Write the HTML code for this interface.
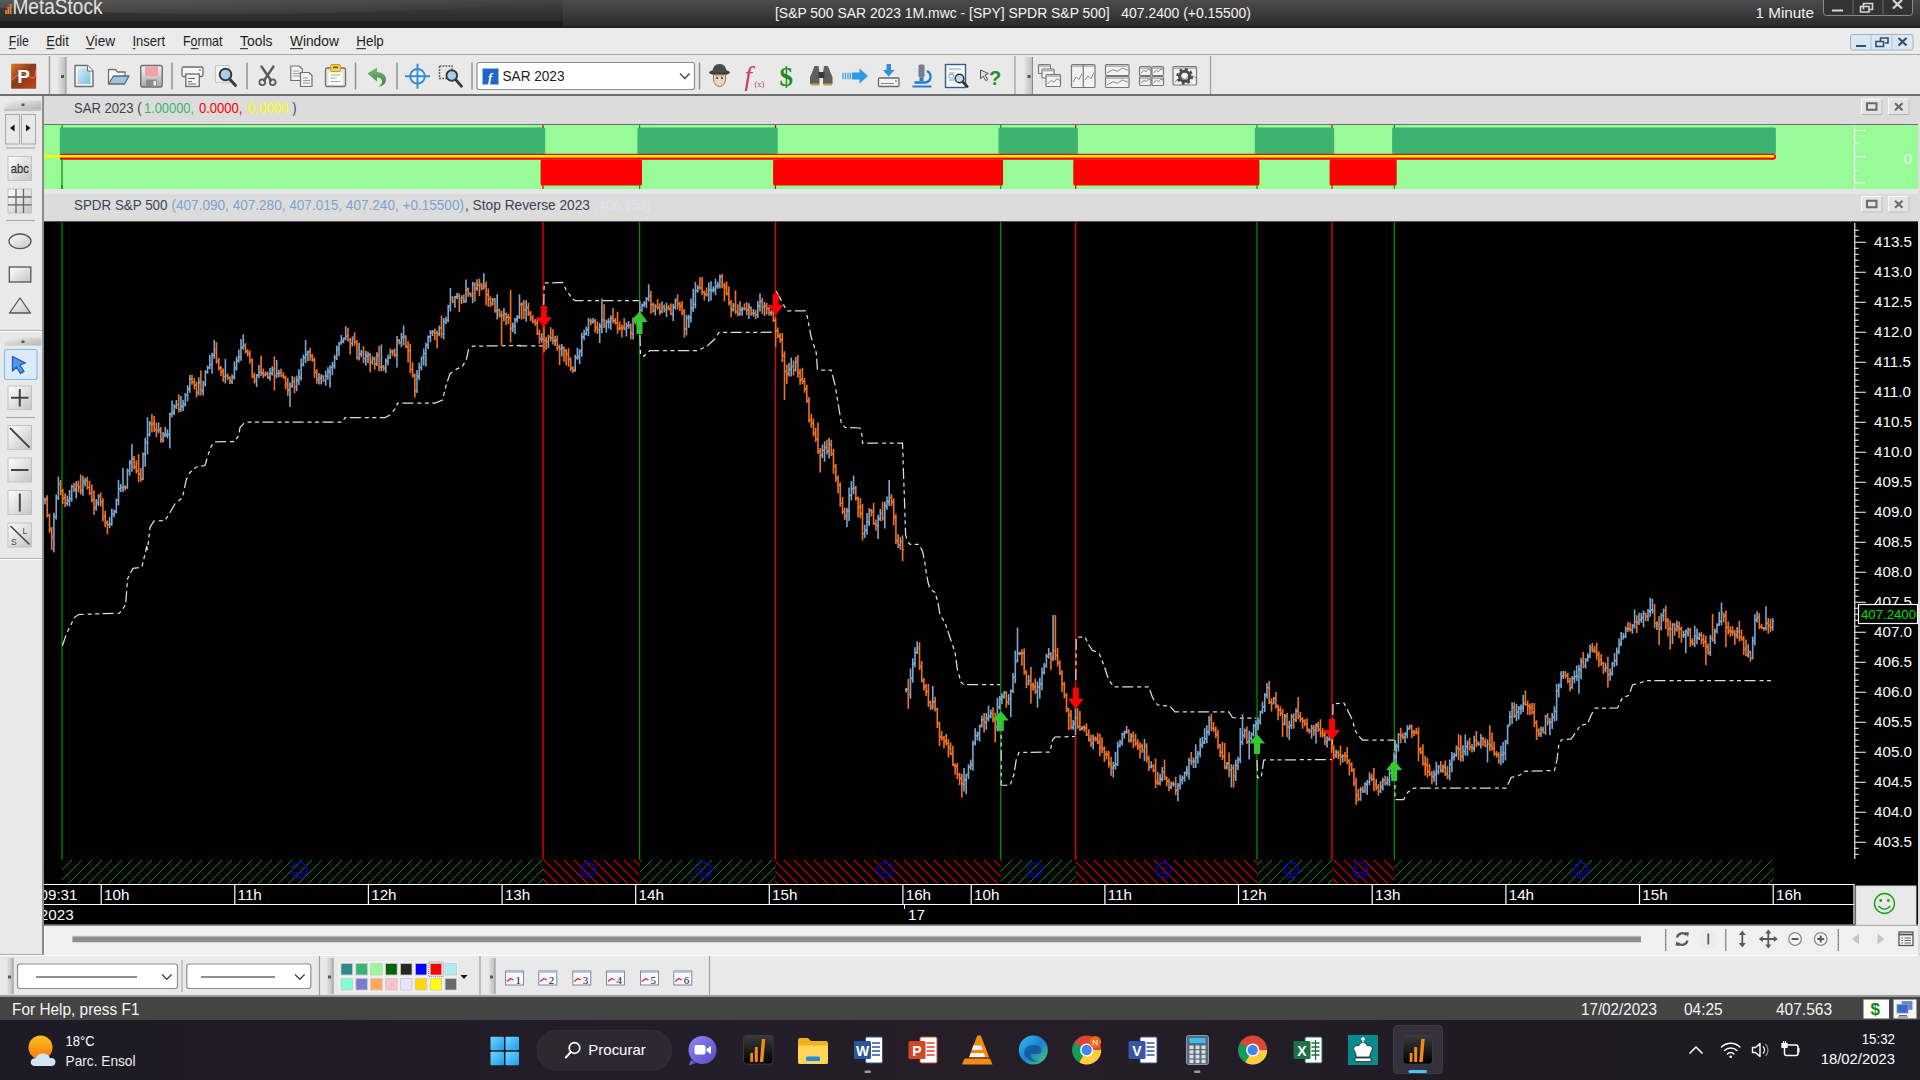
<!DOCTYPE html>
<html><head><meta charset="utf-8"><title>MetaStock</title>
<style>

*{box-sizing:border-box;margin:0;padding:0}
html,body{width:1920px;height:1080px;overflow:hidden;background:#ebebeb;font-family:"Liberation Sans",sans-serif;}
#root{position:relative;width:1920px;height:1080px;overflow:hidden;background:#ebebeb}
.abs{position:absolute}
#title{left:0;top:0;width:1920px;height:28px;background:linear-gradient(#4b4b4b 0,#3b3b3b 50%,#2b2b2b 90%,#1a1a1a 100%)}
#tl{left:0;top:0;width:563px;height:28px;background:linear-gradient(#444 0,#333 45%,#2b2b2b 72%,#1d1d1d 78%,#1d1d1d 100%);overflow:hidden}
#tl i{position:absolute;left:-120px;top:-36px;width:700px;height:50px;border-radius:50%;background:linear-gradient(90deg,rgba(255,255,255,.13),rgba(255,255,255,0))}
#menu{left:0;top:28px;width:1920px;height:27px;background:#ebebeb;border-bottom:1px solid #ababab}
#tb{left:0;top:55px;width:1920px;height:41px;background:#e9e9e9;border-bottom:2px solid #6e6e6e}
#lp{left:0;top:96px;width:44px;height:858.5px;background:#e9e9e9;border-right:2px solid #8c8c8c;border-bottom:1px solid #aaa}
.hdr{background:#dcdcdc}
#status{left:0;top:996.5px;width:1920px;height:23.5px;background:#444}
#task{left:0;top:1020px;width:1920px;height:60px;background:linear-gradient(90deg,#1d1b25 0,#221d28 30%,#251e29 55%,#1e1b24 80%,#1c1a22 100%)}

</style></head>
<body>
<div id="root">

<div id="title" class="abs"></div><div id="tl" class="abs"><i></i></div>
<div id="menu" class="abs"></div>
<div id="tb" class="abs"></div>
<div id="lp" class="abs"></div>
<div class="abs hdr" style="left:44px;top:96px;width:1874px;height:29px;border-bottom:1px solid #707070"></div>
<div class="abs" style="left:44px;top:189px;width:1874px;height:5px;background:#e6e6e6"></div>
<div class="abs hdr" style="left:44px;top:194px;width:1874px;height:28px;border-bottom:1px solid #555"></div>
<div class="abs" style="left:44px;top:926px;width:1876px;height:29px;background:#f0f0f0"></div>
<div class="abs" style="left:0;top:955px;width:1920px;height:42px;background:#e9e9e9;border-top:1px solid #fff;border-bottom:2px solid #9a9a9a"></div>
<div id="status" class="abs"></div>

<svg class="abs" style="left:0;top:0" width="1920" height="1080" viewBox="0 0 1920 1080" font-family="Liberation Sans, sans-serif">
<rect x="44" y="125" width="1874" height="64" fill="#98fb98"/>
<rect x="59.8" y="127.5" width="485.4" height="26.5" rx="1.5" fill="#3cb371"/>
<rect x="540.6" y="159.5" width="101.4" height="26" rx="1.5" fill="#f00"/>
<rect x="637.4" y="127.5" width="140.3" height="26.5" rx="1.5" fill="#3cb371"/>
<rect x="773.1" y="159.5" width="230" height="26" rx="1.5" fill="#f00"/>
<rect x="998.5" y="127.5" width="79.4" height="26.5" rx="1.5" fill="#3cb371"/>
<rect x="1073.3" y="159.5" width="186.1" height="26" rx="1.5" fill="#f00"/>
<rect x="1254.8" y="127.5" width="79.4" height="26.5" rx="1.5" fill="#3cb371"/>
<rect x="1329.6" y="159.5" width="67.1" height="26" rx="1.5" fill="#f00"/>
<rect x="1392.1" y="127.5" width="383.8" height="26.5" rx="1.5" fill="#3cb371"/>
<path d="M44 156.3H62" stroke="#ff0" stroke-width="2.6"/>
<path d="M60 156.7H1773" stroke="#f00" stroke-width="6"/><circle cx="1773" cy="156.7" r="3" fill="#f00"/>
<path d="M60 156.3H1773" stroke="#ff0" stroke-width="2.4"/><circle cx="1773" cy="156.3" r="1.2" fill="#ff0"/>
<path d="M62 125V128M62 185V189" stroke="#0a9a0a" stroke-width="1.2"/>
<path d="M543 125V128M543 185V189" stroke="#e00000" stroke-width="1.2"/>
<path d="M639.6 125V128M639.6 185V189" stroke="#0a9a0a" stroke-width="1.2"/>
<path d="M775.5 125V128M775.5 185V189" stroke="#e00000" stroke-width="1.2"/>
<path d="M1000.7 125V128M1000.7 185V189" stroke="#0a9a0a" stroke-width="1.2"/>
<path d="M1075.7 125V128M1075.7 185V189" stroke="#e00000" stroke-width="1.2"/>
<path d="M1257 125V128M1257 185V189" stroke="#0a9a0a" stroke-width="1.2"/>
<path d="M1332 125V128M1332 185V189" stroke="#e00000" stroke-width="1.2"/>
<path d="M1394.3 125V128M1394.3 185V189" stroke="#0a9a0a" stroke-width="1.2"/>
<path d="M62 157V189" stroke="#0a8a0a" stroke-width="1.2"/>
<path d="M1854.5 125V189M1854.5 130.5h10.5M1854.5 143h4.5M1854.5 156.7h10.5M1854.5 170.5h4.5M1854.5 183h10.5" stroke="#fff" stroke-width="1.1" fill="none"/>
<text x="1904" y="163.5" font-size="14.5" fill="#f0fff0">0</text>
<rect x="44" y="222" width="1874" height="702.7" fill="#000"/><rect x="44" y="924.7" width="1876" height="1.3" fill="#8c8c8c"/>
<path d="M62 222V859.5" stroke="#009800" stroke-width="1.2"/>
<path d="M543 222V859.5" stroke="#f00000" stroke-width="1.35"/>
<path d="M639.6 222V859.5" stroke="#009800" stroke-width="1.2"/>
<path d="M775.5 222V859.5" stroke="#f00000" stroke-width="1.35"/>
<path d="M1000.7 222V859.5" stroke="#009800" stroke-width="1.2"/>
<path d="M1075.7 222V859.5" stroke="#f00000" stroke-width="1.35"/>
<path d="M1257 222V859.5" stroke="#009800" stroke-width="1.2"/>
<path d="M1332 222V859.5" stroke="#f00000" stroke-width="1.35"/>
<path d="M1394.3 222V859.5" stroke="#009800" stroke-width="1.2"/>
<defs>
<pattern id="hg" width="10" height="10" patternUnits="userSpaceOnUse" x="2" y="860"><path d="M-1 11L11 -1M-1 1L1 -1M9 11L11 9" stroke="#009000" stroke-width="1"/></pattern>
<pattern id="hr" width="10" height="10" patternUnits="userSpaceOnUse" x="4" y="860"><path d="M-1 -1L11 11M9 -1L11 1M-1 9L1 11" stroke="#d80000" stroke-width="1.1"/></pattern>
</defs>
<rect x="62" y="860" width="481" height="24" fill="url(#hg)"/>
<rect x="543" y="860" width="96.6" height="24" fill="url(#hr)"/>
<rect x="639.6" y="860" width="135.9" height="24" fill="url(#hg)"/>
<rect x="775.5" y="860" width="225.2" height="24" fill="url(#hr)"/>
<rect x="1000.7" y="860" width="75" height="24" fill="url(#hg)"/>
<rect x="1075.7" y="860" width="181.3" height="24" fill="url(#hr)"/>
<rect x="1257" y="860" width="75" height="24" fill="url(#hg)"/>
<rect x="1332" y="860" width="62.3" height="24" fill="url(#hr)"/>
<rect x="1394.3" y="860" width="379.4" height="24" fill="url(#hg)"/>
<g stroke="#0000d0" fill="none" stroke-width="1.3"><circle cx="299.5" cy="870" r="7.3"/><path d="M295.5 872q4 4.2 8 0"/><path d="M296.1 867.4h1.4M301.5 867.4h1.4" stroke-width="1.5"/></g>
<g stroke="#0000d0" fill="none" stroke-width="1.3"><circle cx="588.3" cy="870" r="7.3"/><path d="M584.3 874.2q4 -4.2 8 0"/><path d="M584.9 867.4h1.4M590.3 867.4h1.4" stroke-width="1.5"/></g>
<g stroke="#0000d0" fill="none" stroke-width="1.3"><circle cx="704.5" cy="870" r="7.3"/><path d="M700.5 872q4 4.2 8 0"/><path d="M701.1 867.4h1.4M706.5 867.4h1.4" stroke-width="1.5"/></g>
<g stroke="#0000d0" fill="none" stroke-width="1.3"><circle cx="885.1" cy="870" r="7.3"/><path d="M881.1 874.2q4 -4.2 8 0"/><path d="M881.7 867.4h1.4M887.1 867.4h1.4" stroke-width="1.5"/></g>
<g stroke="#0000d0" fill="none" stroke-width="1.3"><circle cx="1035.2" cy="870" r="7.3"/><path d="M1031.2 872q4 4.2 8 0"/><path d="M1031.8 867.4h1.4M1037.2 867.4h1.4" stroke-width="1.5"/></g>
<g stroke="#0000d0" fill="none" stroke-width="1.3"><circle cx="1163.3" cy="870" r="7.3"/><path d="M1159.3 874.2q4 -4.2 8 0"/><path d="M1159.9 867.4h1.4M1165.3 867.4h1.4" stroke-width="1.5"/></g>
<g stroke="#0000d0" fill="none" stroke-width="1.3"><circle cx="1291.5" cy="870" r="7.3"/><path d="M1287.5 872q4 4.2 8 0"/><path d="M1288.1 867.4h1.4M1293.5 867.4h1.4" stroke-width="1.5"/></g>
<g stroke="#0000d0" fill="none" stroke-width="1.3"><circle cx="1360.2" cy="870" r="7.3"/><path d="M1356.2 874.2q4 -4.2 8 0"/><path d="M1356.8 867.4h1.4M1362.2 867.4h1.4" stroke-width="1.5"/></g>
<g stroke="#0000d0" fill="none" stroke-width="1.3"><circle cx="1581" cy="870" r="7.3"/><path d="M1577 872q4 4.2 8 0"/><path d="M1577.6 867.4h1.4M1583 867.4h1.4" stroke-width="1.5"/></g>
<path d="M62.4 645.8 L66.5 633.6 L74.6 617.3 L78.7 614.5 L119.5 613.2 L125.6 605.1 L127.6 578.6 L132.9 568.4 L141.9 567.2 L146.8 546 L147.5 550 L150 527.5 L153.8 521.2 L165 520.5 L170 512.5 L175 503.8 L182.5 497.5 L186.2 480 L190 472.5 L196.2 467 L205 465.5 L208 455 L211.2 446.2 L215 442 L235 441.5 L238.8 435 L240 427.5 L245 422 L342.5 422 L345 417.5 L385 417.5 L390 415 L396.2 407.5 L397.5 403 L435 403 L442.5 400 L446.2 385 L450 373.8 L455 370 L462.5 366.2 L466.2 360 L468.8 348.8 L472.5 346.2 L520 345.5 L520 345.8 L543.8 345.8" fill="none" stroke="#dcdce2" stroke-width="1.25" stroke-dasharray="11 4 4 3.5 4 3.5"/>
<path d="M543.8 305 L544.2 283 L562.5 282.5 L566.2 290 L572.5 298.8 L575 300.5 L638.8 300.5" fill="none" stroke="#dcdce2" stroke-width="1.25" stroke-dasharray="11 4 4 3.5 4 3.5"/>
<path d="M640 335 L640.5 355 L643.8 356.2 L650 350.5 L697.5 350.5 L707.5 345.8 L715 338.8 L718.8 332.5 L775 332.2" fill="none" stroke="#dcdce2" stroke-width="1.25" stroke-dasharray="11 4 4 3.5 4 3.5"/>
<path d="M776.2 291.2 L785 307.5 L787.5 310.8 L805.5 310.8 L807.5 317.5 L811.2 337.5 L816.2 352.5 L817.5 370 L831.2 370 L835 385 L838.8 407.5 L841.2 422.5 L845 427.5 L860 428 L862 435 L862.5 443.2 L902.5 443.2 L903.2 460 L903.1 463.8 L904.4 497.5 L905.6 535 L907.5 541.2 L910 544.4 L918.8 544.4 L922.5 551.2 L924.4 560 L926.2 572.5 L928.1 582.5 L930 588.8 L935 592.5 L938 602.5 L940 615 L945 622.5 L950 637.5 L955 652.5 L957.5 670 L961.2 682.5 L963.8 684.5 L1000 684.5" fill="none" stroke="#dcdce2" stroke-width="1.25" stroke-dasharray="11 4 4 3.5 4 3.5"/>
<path d="M1001.2 720 L1001.2 785 L1010 785.5 L1013.8 775 L1016.2 760 L1018.8 752.5 L1050 752 L1052.5 740 L1055 737 L1075 736.5" fill="none" stroke="#dcdce2" stroke-width="1.25" stroke-dasharray="11 4 4 3.5 4 3.5"/>
<path d="M1075.8 680 L1076.2 637 L1085 637 L1088.8 645 L1092.5 650.5 L1098.8 652.5 L1103.8 665 L1108.8 680 L1113.8 686.8 L1148.8 686.8 L1152.5 697.5 L1157.5 705 L1170 706.2 L1175 711.8 L1228.8 711.8 L1232.5 717.5 L1240 718.2 L1256.2 718.2" fill="none" stroke="#dcdce2" stroke-width="1.25" stroke-dasharray="11 4 4 3.5 4 3.5"/>
<path d="M1257 760 L1257.5 777.5 L1261.2 777.5 L1263.8 760 L1332 759.5" fill="none" stroke="#dcdce2" stroke-width="1.25" stroke-dasharray="11 4 4 3.5 4 3.5"/>
<path d="M1332.5 745 L1333 703.8 L1332.5 703.8 L1343.8 703 L1347.5 710 L1352.5 720 L1355 730 L1358.8 736.2 L1362.5 740 L1393.8 740" fill="none" stroke="#dcdce2" stroke-width="1.25" stroke-dasharray="11 4 4 3.5 4 3.5"/>
<path d="M1395 740 L1395 799.5 L1403.8 799.5 L1407.5 792.5 L1413.8 788 L1506.2 788 L1511.2 777.5 L1520 775 L1525 771.2 L1554.5 770.5 L1557 760 L1558.8 745 L1561.2 740 L1571.2 738.8 L1577.5 730 L1580 725.5 L1587.5 723.8 L1591.2 715 L1595 708.2 L1617.5 708 L1622.5 697.5 L1628.8 695.5 L1632.5 685 L1642.5 682 L1647.5 680.5 L1773.8 680.5" fill="none" stroke="#dcdce2" stroke-width="1.25" stroke-dasharray="11 4 4 3.5 4 3.5"/>
<path d="M47.2 495.2V517.4M47.2 499.2h-1.2M47.2 515.7h1.2M49.5 513.6V532.8M49.5 515.4h-1.2M49.5 529.3h1.2M51.7 527.1V550M51.7 529.5h-1.2M51.7 536.6h1.2M60.6 480V495.2M60.6 483.2h-1.2M60.6 490.8h1.2M62.8 488.8V504.1M62.8 491.1h-1.2M62.8 498.5h1.2M65.1 493.2V507.3M65.1 497.9h-1.2M65.1 503.6h1.2M74 482.7V491.9M74 486.7h-1.2M74 490.3h1.2M78.4 480.6V492.5M78.4 485.4h-1.2M78.4 487.9h1.2M80.7 474.5V494.4M80.7 486.4h-1.2M80.7 490.6h1.2M87.3 476.7V489.5M87.3 480.4h-1.2M87.3 487.3h1.2M89.6 480.8V495.3M89.6 487.5h-1.2M89.6 493.3h1.2M91.8 484.4V502.2M91.8 493.3h-1.2M91.8 500.4h1.2M94 490.2V514.9M94 499.4h-1.2M94 507.3h1.2M100.7 492.4V506.5M100.7 496.3h-1.2M100.7 501.8h1.2M102.9 498.3V521.4M102.9 501.8h-1.2M102.9 518.3h1.2M105.2 510.7V527.2M105.2 516.4h-1.2M105.2 523.1h1.2M107.4 520.5V534.3M107.4 522.2h-1.2M107.4 524.6h1.2M125.2 485.2V490.5M125.2 487.1h-1.2M125.2 487.4h1.2M134.1 455.9V469.2M134.1 459.1h-1.2M134.1 467.1h1.2M136.3 460.3V473.6M136.3 467.2h-1.2M136.3 470.7h1.2M138.6 454.3V482.2M138.6 470.9h-1.2M138.6 473.8h1.2M140.8 468V481.7M140.8 474.3h-1.2M140.8 479.3h1.2M151.9 414.1V432.6M151.9 423.9h-1.2M151.9 424.5h1.2M154.2 416.1V432.1M154.2 423.4h-1.2M154.2 430.3h1.2M156.4 422.4V437.3M156.4 429.3h-1.2M156.4 430.8h1.2M160.8 427.1V442.8M160.8 430.4h-1.2M160.8 439.4h1.2M178.7 394.2V412.5M178.7 404.4h-1.2M178.7 409.5h1.2M192 374.8V384.7M192 379.2h-1.2M192 382.2h1.2M194.3 377.9V389.6M194.3 382h-1.2M194.3 385.1h1.2M196.5 381.6V397.6M196.5 385.2h-1.2M196.5 392.7h1.2M200.9 370.4V395.6M200.9 382.1h-1.2M200.9 389.8h1.2M216.5 342.2V363.7M216.5 350.1h-1.2M216.5 361.6h1.2M218.8 357.7V370.4M218.8 360.7h-1.2M218.8 368.2h1.2M221 366.1V375.9M221 367.6h-1.2M221 371.5h1.2M223.2 368.4V381.8M223.2 371.4h-1.2M223.2 376.8h1.2M227.7 373.5V379.8M227.7 376.1h-1.2M227.7 378.1h1.2M229.9 376.2V384.1M229.9 378.2h-1.2M229.9 380.6h1.2M245.5 343.3V353.4M245.5 345.8h-1.2M245.5 351.5h1.2M247.7 349.3V356.5M247.7 351.6h-1.2M247.7 353.7h1.2M249.9 350.5V363.8M249.9 353.2h-1.2M249.9 359.8h1.2M252.2 358.6V378.1M252.2 360.1h-1.2M252.2 375.6h1.2M254.4 372.5V383.5M254.4 376.9h-1.2M254.4 381.2h1.2M261.1 355.6V375.9M261.1 371.6h-1.2M261.1 372.9h1.2M263.3 368.4V378.2M263.3 373.5h-1.2M263.3 374.8h1.2M267.8 371.4V379M267.8 373.6h-1.2M267.8 377.1h1.2M274.4 356.2V390.4M274.4 369.4h-1.2M274.4 376h1.2M281.1 368.5V377M281.1 372.5h-1.2M281.1 375.5h1.2M283.4 372.1V378.8M283.4 375.5h-1.2M283.4 377.2h1.2M285.6 375.4V389.4M285.6 377.8h-1.2M285.6 384.8h1.2M287.8 378.1V395.9M287.8 383.5h-1.2M287.8 389.9h1.2M294.5 376.8V393.3M294.5 381.9h-1.2M294.5 387h1.2M310.1 347.7V360.8M310.1 351.9h-1.2M310.1 355.4h1.2M312.3 354.1V361.8M312.3 356.6h-1.2M312.3 360h1.2M314.5 357.5V378M314.5 359.9h-1.2M314.5 371.6h1.2M316.8 369.3V383.8M316.8 372.6h-1.2M316.8 380h1.2M323.4 374.9V382.1M323.4 376.4h-1.2M323.4 380.4h1.2M348 327.7V341.5M348 335.8h-1.2M348 340h1.2M350.2 338.1V354.5M350.2 340h-1.2M350.2 343.6h1.2M354.6 332.2V345.4M354.6 336.9h-1.2M354.6 342.3h1.2M356.9 340V359.5M356.9 341.7h-1.2M356.9 357.6h1.2M363.5 346.2V363.2M363.5 353.7h-1.2M363.5 358.1h1.2M370.2 353V372.3M370.2 354.7h-1.2M370.2 361.4h1.2M374.7 356.5V369.4M374.7 359.1h-1.2M374.7 364.1h1.2M379.1 345.7V371.2M379.1 355.7h-1.2M379.1 367.2h1.2M383.6 364.9V371M383.6 366.8h-1.2M383.6 368h1.2M392.5 349.5V356.1M392.5 351.4h-1.2M392.5 352.1h1.2M394.7 348.6V357.6M394.7 351h-1.2M394.7 355h1.2M399.2 339V344.5M399.2 340.6h-1.2M399.2 342.9h1.2M405.9 335.2V348.3M405.9 337.7h-1.2M405.9 346.4h1.2M408.1 341.3V362.4M408.1 347h-1.2M408.1 350.7h1.2M410.3 343.8V373.2M410.3 350.5h-1.2M410.3 369.5h1.2M412.6 362.3V377.6M412.6 369.3h-1.2M412.6 375.2h1.2M414.8 373.4V397.5M414.8 376.2h-1.2M414.8 391h1.2M434.8 328.4V340.1M434.8 330.7h-1.2M434.8 332.9h1.2M437.1 330.5V348.6M437.1 332.8h-1.2M437.1 334.5h1.2M441.5 315.6V338M441.5 328h-1.2M441.5 334h1.2M452.6 296.2V303.3M452.6 299.1h-1.2M452.6 301.1h1.2M459.3 293.3V312M459.3 296.4h-1.2M459.3 299.3h1.2M463.8 294.6V303M463.8 298.2h-1.2M463.8 301.4h1.2M468.2 287.4V296.7M468.2 289.1h-1.2M468.2 293.3h1.2M470.5 292.2V296.7M470.5 293.9h-1.2M470.5 295.1h1.2M474.9 282.2V301.5M474.9 284.9h-1.2M474.9 288.7h1.2M479.4 278.6V296.1M479.4 285.2h-1.2M479.4 285.7h1.2M481.6 282.8V290.6M481.6 284.4h-1.2M481.6 288.2h1.2M486.1 281.8V305.3M486.1 285.8h-1.2M486.1 294.3h1.2M488.3 288.6V306.8M488.3 294.9h-1.2M488.3 299.1h1.2M490.5 296.3V307.1M490.5 299.3h-1.2M490.5 304.3h1.2M495 298V312.7M495 299.7h-1.2M495 311h1.2M499.4 308.7V317.4M499.4 310.5h-1.2M499.4 315.6h1.2M501.6 310.7V345M501.6 314.3h-1.2M501.6 315.7h1.2M506.1 312.4V325.3M506.1 314.3h-1.2M506.1 317.1h1.2M508.3 313.7V323.9M508.3 316.9h-1.2M508.3 317.6h1.2M510.6 290V342.5M510.6 317.7h-1.2M510.6 328.1h1.2M521.7 302.2V319.4M521.7 304.4h-1.2M521.7 304.9h1.2M523.9 300.1V319.1M523.9 303.3h-1.2M523.9 310.3h1.2M528.4 302.9V316M528.4 307.9h-1.2M528.4 313.6h1.2M530.6 311V321M530.6 313.3h-1.2M530.6 318.5h1.2M532.8 315.2V323.3M532.8 317.5h-1.2M532.8 321.8h1.2M535.1 319V325.7M535.1 321.2h-1.2M535.1 322.8h1.2M537.3 318.9V334.9M537.3 323.2h-1.2M537.3 333.2h1.2M539.5 329.4V343.8M539.5 333.8h-1.2M539.5 338.6h1.2M544 326.3V352.5M544 338.8h-1.2M544 340.8h1.2M546.2 336.7V350M546.2 340.1h-1.2M546.2 341.3h1.2M550.7 327.3V341.6M550.7 337.1h-1.2M550.7 338.1h1.2M552.9 329.2V344.4M552.9 338.4h-1.2M552.9 340.7h1.2M557.3 335.5V350.7M557.3 340.5h-1.2M557.3 347.6h1.2M559.6 344.4V365M559.6 347.1h-1.2M559.6 348.8h1.2M564 346.5V361.8M564 348.4h-1.2M564 350h1.2M566.2 349.2V365.5M566.2 350.9h-1.2M566.2 354.6h1.2M568.5 348.3V366.7M568.5 353.3h-1.2M568.5 359h1.2M570.7 357.3V371.1M570.7 359.7h-1.2M570.7 367.7h1.2M572.9 366.3V373M572.9 368.5h-1.2M572.9 370.6h1.2M590.8 318.4V325.2M590.8 320.7h-1.2M590.8 321.4h1.2M595.2 319.1V332.5M595.2 320.8h-1.2M595.2 327.3h1.2M597.4 321.6V333.9M597.4 328.5h-1.2M597.4 329.8h1.2M604.1 304.2V327.9M604.1 320.2h-1.2M604.1 323.9h1.2M613 308V323.2M613 318.6h-1.2M613 320.9h1.2M615.3 317.9V324.6M615.3 320.8h-1.2M615.3 323h1.2M617.5 311.8V333.8M617.5 323.2h-1.2M617.5 328.2h1.2M619.7 321.5V330.6M619.7 328.5h-1.2M619.7 328.7h1.2M621.9 324.4V337.4M621.9 327.5h-1.2M621.9 328.4h1.2M624.2 318.2V329.9M624.2 327.4h-1.2M624.2 328h1.2M630.8 323.4V339.2M630.8 325.6h-1.2M630.8 332.8h1.2M635.3 315.8V324.6M635.3 321.2h-1.2M635.3 321.7h1.2M650.9 290.8V313.8M650.9 295.9h-1.2M650.9 304.9h1.2M653.1 302.4V312.5M653.1 305h-1.2M653.1 311h1.2M657.6 299.3V309.8M657.6 305.6h-1.2M657.6 307.2h1.2M659.8 303.2V315M659.8 307.4h-1.2M659.8 311.6h1.2M664.3 304.5V312.4M664.3 306.6h-1.2M664.3 310.1h1.2M668.7 305.3V310.3M668.7 308h-1.2M668.7 308.6h1.2M670.9 303.6V315.3M670.9 309.7h-1.2M670.9 313.8h1.2M677.6 294.3V309.4M677.6 300.8h-1.2M677.6 303.6h1.2M679.9 301.7V311M679.9 304.4h-1.2M679.9 306.6h1.2M682.1 301.2V315.2M682.1 305.3h-1.2M682.1 312.5h1.2M684.3 308.9V337.6M684.3 311.2h-1.2M684.3 328.4h1.2M699.9 277.3V289.8M699.9 287.5h-1.2M699.9 287.8h1.2M702.1 277.1V295.1M702.1 288.2h-1.2M702.1 292.1h1.2M704.4 290.6V300.5M704.4 292.2h-1.2M704.4 294.7h1.2M706.6 287.6V296.5M706.6 293.9h-1.2M706.6 294.7h1.2M722.2 274V288.2M722.2 276.5h-1.2M722.2 285.5h1.2M724.4 282.5V301.3M724.4 285.4h-1.2M724.4 287.9h1.2M726.6 281.3V295.6M726.6 286.3h-1.2M726.6 294h1.2M728.9 286.4V305.6M728.9 293.3h-1.2M728.9 302.6h1.2M731.1 299.9V317.3M731.1 302.3h-1.2M731.1 308.7h1.2M735.5 290.5V313.9M735.5 305.7h-1.2M735.5 312.3h1.2M737.8 304.2V316.2M737.8 311.4h-1.2M737.8 314h1.2M744.4 303.5V310.6M744.4 308.7h-1.2M744.4 308.8h1.2M746.7 302V315.2M746.7 309.1h-1.2M746.7 310.1h1.2M751.1 306.5V315.7M751.1 308h-1.2M751.1 313.4h1.2M755.6 309.8V319.1M755.6 313.5h-1.2M755.6 314.9h1.2M762.3 297.8V314M762.3 301.4h-1.2M762.3 307.2h1.2M766.7 303V314.4M766.7 305.8h-1.2M766.7 308.6h1.2M769 306.7V315.7M769 308.8h-1.2M769 313.2h1.2M773.4 307V322.1M773.4 313.2h-1.2M773.4 320.3h1.2M775.6 317.4V347M775.6 320.6h-1.2M775.6 330.6h1.2M777.9 327.4V338.2M777.9 331h-1.2M777.9 335.9h1.2M780.1 333.3V342.7M780.1 335.7h-1.2M780.1 339.4h1.2M782.3 333.1V361.9M782.3 340.2h-1.2M782.3 356.1h1.2M784.5 351.2V400M784.5 355h-1.2M784.5 371.6h1.2M786.8 364.6V384.1M786.8 371h-1.2M786.8 374h1.2M793.5 360.5V375.6M793.5 366.1h-1.2M793.5 370.4h1.2M797.9 355V377.7M797.9 361h-1.2M797.9 372.6h1.2M800.1 368.9V384.9M800.1 372.6h-1.2M800.1 379.9h1.2M802.4 367.8V384.1M802.4 378.9h-1.2M802.4 381.9h1.2M804.6 377.9V392.8M804.6 381.1h-1.2M804.6 388.9h1.2M806.8 384.8V402.8M806.8 389.1h-1.2M806.8 400.7h1.2M809 396.9V422.6M809 401.1h-1.2M809 420.7h1.2M811.3 413.8V427.8M811.3 419.8h-1.2M811.3 423.8h1.2M813.5 418.6V436.4M813.5 422.8h-1.2M813.5 433h1.2M815.7 427.8V442.3M815.7 433.5h-1.2M815.7 439h1.2M818 422.6V453.9M818 439h-1.2M818 450.8h1.2M820.2 448V472.5M820.2 451.4h-1.2M820.2 455.5h1.2M826.9 439.7V454.4M826.9 447h-1.2M826.9 451.1h1.2M831.3 439.8V456M831.3 444.3h-1.2M831.3 453.6h1.2M833.5 449.1V473.9M833.5 454.3h-1.2M833.5 466.2h1.2M835.8 463.9V481.9M835.8 466.6h-1.2M835.8 477.5h1.2M838 475.5V493.3M838 478.6h-1.2M838 484.9h1.2M840.2 482.3V506.7M840.2 484.8h-1.2M840.2 503.2h1.2M842.5 497.1V514.3M842.5 503.2h-1.2M842.5 511.6h1.2M844.7 507.8V520.1M844.7 511.7h-1.2M844.7 516.6h1.2M855.8 485.9V500.8M855.8 487.9h-1.2M855.8 498.3h1.2M858.1 496.4V517.2M858.1 498.4h-1.2M858.1 507.2h1.2M860.3 497.9V518.2M860.3 507.4h-1.2M860.3 513.4h1.2M862.5 504V540.5M862.5 513.6h-1.2M862.5 533.5h1.2M871.4 509.1V516.4M871.4 511.2h-1.2M871.4 512.5h1.2M873.6 502.9V525M873.6 511.5h-1.2M873.6 523.5h1.2M875.9 519.5V530.7M875.9 523.9h-1.2M875.9 525.3h1.2M882.6 502V520.8M882.6 513.1h-1.2M882.6 517.8h1.2M891.5 494V506.1M891.5 497.6h-1.2M891.5 502.6h1.2M893.7 498.5V525.5M893.7 501.2h-1.2M893.7 517.7h1.2M895.9 514.3V544M895.9 516.9h-1.2M895.9 540h1.2M898.1 534V547.9M898.1 541.1h-1.2M898.1 544.9h1.2M902.6 535.5V561.2M902.6 541.6h-1.2M902.6 549.6h1.2M908.3 678.8V708.8M908.3 689.5h-1.2M908.3 695h1.2M919.5 642.3V670M919.5 647.6h-1.2M919.5 666.9h1.2M921.7 661.1V682.5M921.7 665.6h-1.2M921.7 680h1.2M923.9 677.9V690.7M923.9 680.8h-1.2M923.9 687.1h1.2M926.1 684V696M926.1 685.7h-1.2M926.1 691.5h1.2M928.4 684.1V707.1M928.4 691.6h-1.2M928.4 702.5h1.2M930.6 700.5V710M930.6 702.1h-1.2M930.6 706.7h1.2M935.1 696.7V711.6M935.1 702h-1.2M935.1 709.2h1.2M937.3 707.8V728.1M937.3 709.3h-1.2M937.3 722.5h1.2M939.5 722.1V745.9M939.5 723.9h-1.2M939.5 737.1h1.2M941.7 731.1V740.8M941.7 737.2h-1.2M941.7 738.3h1.2M944 736.1V748.6M944 737.8h-1.2M944 741.8h1.2M946.2 734V745.5M946.2 740.2h-1.2M946.2 743.7h1.2M948.4 739.1V757.6M948.4 742.8h-1.2M948.4 746.4h1.2M950.6 742.4V755.2M950.6 748.5h-1.2M950.6 753.6h1.2M952.9 746.1V766.1M952.9 753.7h-1.2M952.9 764.3h1.2M955.1 763.4V774.8M955.1 765.5h-1.2M955.1 766.2h1.2M957.3 763.1V778.9M957.3 766.2h-1.2M957.3 774.3h1.2M959.6 772.7V785.1M959.6 774.8h-1.2M959.6 777.9h1.2M961.8 773.7V797.5M961.8 778.7h-1.2M961.8 783.5h1.2M984.1 713.1V732.6M984.1 718.8h-1.2M984.1 722.3h1.2M993 707.3V722.5M993 714.5h-1.2M993 718.8h1.2M995.2 712.7V742.5M995.2 719.6h-1.2M995.2 728.1h1.2M1006.3 691.2V707.7M1006.3 693.1h-1.2M1006.3 702.5h1.2M1021.9 649.2V665.7M1021.9 652.9h-1.2M1021.9 653.6h1.2M1024.2 648.6V674.7M1024.2 653.4h-1.2M1024.2 671.4h1.2M1026.4 670.2V688.2M1026.4 672.8h-1.2M1026.4 683.7h1.2M1030.9 666.9V703.6M1030.9 680.5h-1.2M1030.9 684.9h1.2M1033.1 682.5V690.7M1033.1 685.1h-1.2M1033.1 687.6h1.2M1035.3 678.6V694M1035.3 686.6h-1.2M1035.3 692.3h1.2M1050.9 652V670M1050.9 654.4h-1.2M1050.9 658.8h1.2M1055.4 615V660.3M1055.4 651.1h-1.2M1055.4 655.2h1.2M1057.6 647.7V666.8M1057.6 655.5h-1.2M1057.6 663h1.2M1059.8 660.3V674.9M1059.8 662.7h-1.2M1059.8 673.2h1.2M1062 670.2V692.3M1062 672.2h-1.2M1062 683.4h1.2M1064.3 682.1V698.4M1064.3 684.3h-1.2M1064.3 695.8h1.2M1066.5 693V712.2M1066.5 695.2h-1.2M1066.5 708.3h1.2M1068.7 707.9V730.3M1068.7 709.9h-1.2M1068.7 715h1.2M1071 710.1V729.6M1071 715.5h-1.2M1071 727.3h1.2M1077.6 708.3V728.8M1077.6 718h-1.2M1077.6 727.1h1.2M1079.9 711.1V731M1079.9 726.4h-1.2M1079.9 729.4h1.2M1084.3 725V731.7M1084.3 727.2h-1.2M1084.3 728.1h1.2M1086.5 723.3V736.1M1086.5 727.9h-1.2M1086.5 734.1h1.2M1088.8 729.3V741.8M1088.8 735.3h-1.2M1088.8 739.5h1.2M1091 734.8V747M1091 739.7h-1.2M1091 743h1.2M1095.5 736.3V741.5M1095.5 738.6h-1.2M1095.5 739.8h1.2M1097.7 732.8V744.3M1097.7 738.9h-1.2M1097.7 742.6h1.2M1099.9 733.8V756.2M1099.9 741.9h-1.2M1099.9 747.5h1.2M1102.1 737.3V752.9M1102.1 747.5h-1.2M1102.1 749h1.2M1104.4 746.3V761.9M1104.4 748.6h-1.2M1104.4 754h1.2M1106.6 751.1V759.4M1106.6 754.3h-1.2M1106.6 754.6h1.2M1108.8 751V767.5M1108.8 754.6h-1.2M1108.8 763.4h1.2M1111.1 756.7V775.7M1111.1 764.3h-1.2M1111.1 767h1.2M1128.9 729.2V742.5M1128.9 730.9h-1.2M1128.9 740.5h1.2M1133.3 731.4V747.9M1133.3 736.1h-1.2M1133.3 739.3h1.2M1135.6 733.7V746.3M1135.6 740.2h-1.2M1135.6 744.2h1.2M1137.8 739.2V749.9M1137.8 742.5h-1.2M1137.8 746.4h1.2M1140 742.3V758.5M1140 745.6h-1.2M1140 746.8h1.2M1142.2 743.6V752.9M1142.2 746.1h-1.2M1142.2 749.9h1.2M1146.7 743.3V762.6M1146.7 745h-1.2M1146.7 758.5h1.2M1148.9 755.5V770.9M1148.9 758h-1.2M1148.9 767.4h1.2M1153.4 764.3V772.3M1153.4 765.9h-1.2M1153.4 770.3h1.2M1155.6 758.5V788M1155.6 770h-1.2M1155.6 782.9h1.2M1157.8 772.1V784.9M1157.8 781.4h-1.2M1157.8 783.3h1.2M1164.5 759.4V780.1M1164.5 771.7h-1.2M1164.5 777.3h1.2M1166.7 776.5V786.2M1166.7 778.4h-1.2M1166.7 781.5h1.2M1169 778.6V791.2M1169 781.2h-1.2M1169 787.4h1.2M1175.7 776.7V795.3M1175.7 784.8h-1.2M1175.7 790.4h1.2M1191.3 752V765M1191.3 760.8h-1.2M1191.3 761.4h1.2M1211.3 714V731.2M1211.3 718.9h-1.2M1211.3 728h1.2M1213.5 722.1V731.9M1213.5 728.3h-1.2M1213.5 729.1h1.2M1215.8 726.5V738.1M1215.8 729.8h-1.2M1215.8 735.2h1.2M1218 729.7V748.9M1218 733.7h-1.2M1218 745.3h1.2M1220.2 743.9V757.1M1220.2 746h-1.2M1220.2 752.5h1.2M1222.4 741.7V760.1M1222.4 752.3h-1.2M1222.4 757.2h1.2M1224.7 742.9V769.3M1224.7 755.9h-1.2M1224.7 767h1.2M1229.1 752.5V777.2M1229.1 763.1h-1.2M1229.1 770.3h1.2M1233.6 764.5V787.5M1233.6 767.6h-1.2M1233.6 775.3h1.2M1246.9 726.5V744.1M1246.9 730.6h-1.2M1246.9 742.1h1.2M1269.2 681.1V704M1269.2 687.8h-1.2M1269.2 702.1h1.2M1271.5 698.2V711.6M1271.5 702.4h-1.2M1271.5 703.8h1.2M1275.9 692.1V708.8M1275.9 698.1h-1.2M1275.9 705.7h1.2M1278.1 704.4V720.2M1278.1 706.2h-1.2M1278.1 710.2h1.2M1280.4 706.2V716.2M1280.4 709.9h-1.2M1280.4 713h1.2M1282.6 708.9V736.8M1282.6 713.5h-1.2M1282.6 723.7h1.2M1287 712.9V737.3M1287 715.7h-1.2M1287 727.5h1.2M1293.7 713.2V728.7M1293.7 716h-1.2M1293.7 719.7h1.2M1298.2 696.9V719.2M1298.2 711.2h-1.2M1298.2 716.5h1.2M1300.4 712.1V722.3M1300.4 716.3h-1.2M1300.4 719h1.2M1302.6 717.2V728.7M1302.6 719.2h-1.2M1302.6 720.9h1.2M1304.9 719.2V726.2M1304.9 721.4h-1.2M1304.9 723.5h1.2M1307.1 718.3V732.3M1307.1 723.8h-1.2M1307.1 729.3h1.2M1309.3 728.4V733.8M1309.3 730.3h-1.2M1309.3 731.1h1.2M1313.8 724.9V735.8M1313.8 728h-1.2M1313.8 729.7h1.2M1318.2 721.9V731.7M1318.2 725.6h-1.2M1318.2 729.7h1.2M1320.5 719.3V737.3M1320.5 729.1h-1.2M1320.5 732.6h1.2M1322.7 728.2V737.5M1322.7 733.1h-1.2M1322.7 735.2h1.2M1324.9 730.8V745.2M1324.9 734.9h-1.2M1324.9 740.8h1.2M1331.6 736.4V753.1M1331.6 739.3h-1.2M1331.6 747.7h1.2M1333.8 745.2V759.2M1333.8 748.3h-1.2M1333.8 755.2h1.2M1338.3 750.4V758.9M1338.3 753.1h-1.2M1338.3 755.5h1.2M1340.5 745.5V765M1340.5 754.8h-1.2M1340.5 756.4h1.2M1345 751.9V761.5M1345 755.3h-1.2M1345 756.2h1.2M1347.2 747.3V764.3M1347.2 755.6h-1.2M1347.2 761.3h1.2M1349.4 758.9V775.5M1349.4 760.9h-1.2M1349.4 765.2h1.2M1351.7 762.3V772M1351.7 763.9h-1.2M1351.7 770.4h1.2M1353.9 768V785.9M1353.9 770.8h-1.2M1353.9 782.7h1.2M1356.1 777.7V805M1356.1 782.8h-1.2M1356.1 795.7h1.2M1358.3 788.8V801.3M1358.3 794.8h-1.2M1358.3 798.7h1.2M1362.8 786.2V793M1362.8 788.9h-1.2M1362.8 791.4h1.2M1371.7 773.8V781.2M1371.7 776.5h-1.2M1371.7 779.4h1.2M1373.9 768V791.3M1373.9 779.1h-1.2M1373.9 785.5h1.2M1376.2 779V790.6M1376.2 784h-1.2M1376.2 787h1.2M1378.4 783.9V795.5M1378.4 787.4h-1.2M1378.4 791.4h1.2M1385.1 775.8V785.4M1385.1 780.2h-1.2M1385.1 782.9h1.2M1400.7 727.8V743.3M1400.7 734.5h-1.2M1400.7 735.4h1.2M1402.9 732.8V739.3M1402.9 735.9h-1.2M1402.9 737h1.2M1411.8 724.6V738M1411.8 726.4h-1.2M1411.8 732h1.2M1414 730V736.1M1414 731.9h-1.2M1414 732.2h1.2M1416.3 728.1V734.5M1416.3 732.4h-1.2M1416.3 733h1.2M1418.5 727.3V761.3M1418.5 732.4h-1.2M1418.5 749.9h1.2M1420.7 746.9V754.2M1420.7 749.4h-1.2M1420.7 752.2h1.2M1422.9 744.3V765.7M1422.9 752.4h-1.2M1422.9 763h1.2M1425.2 755.8V775.4M1425.2 764h-1.2M1425.2 764.5h1.2M1427.4 757.8V777.6M1427.4 765.7h-1.2M1427.4 771.2h1.2M1429.6 763.9V776.3M1429.6 771.7h-1.2M1429.6 773.5h1.2M1431.9 771V784.3M1431.9 774.2h-1.2M1431.9 776.4h1.2M1440.8 761V772.5M1440.8 766.7h-1.2M1440.8 770.4h1.2M1445.2 760.5V776M1445.2 766.7h-1.2M1445.2 774.5h1.2M1447.4 766.1V779.3M1447.4 773.2h-1.2M1447.4 775.8h1.2M1458.6 734.3V760.3M1458.6 748.6h-1.2M1458.6 750.2h1.2M1460.8 735.3V761.8M1460.8 748.6h-1.2M1460.8 756.8h1.2M1469.7 738.1V750.4M1469.7 743.7h-1.2M1469.7 746.7h1.2M1472 744.1V752.6M1472 747.3h-1.2M1472 747.9h1.2M1476.4 731.1V747.2M1476.4 740.5h-1.2M1476.4 742.8h1.2M1478.6 741.3V746M1478.6 743.9h-1.2M1478.6 744.2h1.2M1483.1 737.1V745.9M1483.1 739h-1.2M1483.1 741.8h1.2M1485.3 738.3V747.1M1485.3 741.7h-1.2M1485.3 745.3h1.2M1489.8 725.3V751.3M1489.8 743.6h-1.2M1489.8 745.2h1.2M1492 732.5V750.8M1492 746.1h-1.2M1492 748.6h1.2M1494.2 741.5V755.8M1494.2 748.3h-1.2M1494.2 753.8h1.2M1496.5 751.1V757.8M1496.5 753.5h-1.2M1496.5 754.6h1.2M1498.7 752.3V763.8M1498.7 754.7h-1.2M1498.7 761h1.2M1514.3 702.2V718M1514.3 707.8h-1.2M1514.3 715.4h1.2M1525.4 690.6V705.7M1525.4 702.8h-1.2M1525.4 704.2h1.2M1527.7 700.5V714.8M1527.7 704.5h-1.2M1527.7 705.9h1.2M1529.9 703.4V715.3M1529.9 705.7h-1.2M1529.9 707.7h1.2M1532.1 703.1V714.6M1532.1 707h-1.2M1532.1 712.5h1.2M1534.3 702.9V727.3M1534.3 711.8h-1.2M1534.3 722.4h1.2M1536.6 720.3V740.1M1536.6 722.7h-1.2M1536.6 730.5h1.2M1538.8 728.2V736.8M1538.8 730.4h-1.2M1538.8 733.7h1.2M1543.2 726.7V733.6M1543.2 729.7h-1.2M1543.2 732.1h1.2M1547.7 713.2V725.5M1547.7 715.8h-1.2M1547.7 721.5h1.2M1565.5 671.1V678.4M1565.5 675h-1.2M1565.5 675.3h1.2M1567.8 672.8V683.3M1567.8 675.9h-1.2M1567.8 681.2h1.2M1570 677.6V691.2M1570 681.3h-1.2M1570 687.6h1.2M1583.3 652V668.3M1583.3 661.7h-1.2M1583.3 665.6h1.2M1592.3 643V652.4M1592.3 647.8h-1.2M1592.3 650.6h1.2M1594.5 646.1V652.8M1594.5 649.1h-1.2M1594.5 650.8h1.2M1596.7 642.7V659.8M1596.7 651.7h-1.2M1596.7 654.6h1.2M1598.9 651.4V667M1598.9 654.4h-1.2M1598.9 660.5h1.2M1601.2 654.2V666.1M1601.2 659.8h-1.2M1601.2 663.1h1.2M1603.4 661.8V674.1M1603.4 663.4h-1.2M1603.4 669h1.2M1607.9 656.8V687.5M1607.9 667.6h-1.2M1607.9 674.7h1.2M1627.9 622V632.1M1627.9 628.8h-1.2M1627.9 629h1.2M1630.1 622.4V631.4M1630.1 628.9h-1.2M1630.1 629.6h1.2M1636.8 615.3V632.9M1636.8 621.6h-1.2M1636.8 622.3h1.2M1645.7 612.5V621.2M1645.7 614.3h-1.2M1645.7 615.9h1.2M1654.6 604.1V628.3M1654.6 610.7h-1.2M1654.6 623.1h1.2M1659.1 616.1V645M1659.1 625h-1.2M1659.1 628.9h1.2M1665.8 605.6V628.9M1665.8 610.2h-1.2M1665.8 619.6h1.2M1668 618.1V636.4M1668 621.2h-1.2M1668 629.4h1.2M1670.2 620.3V649.6M1670.2 629h-1.2M1670.2 629.1h1.2M1674.7 622.9V635.8M1674.7 625h-1.2M1674.7 629.5h1.2M1679.1 621.5V638.1M1679.1 627.6h-1.2M1679.1 628.9h1.2M1681.4 626.4V642.8M1681.4 628.9h-1.2M1681.4 635.7h1.2M1690.3 628V646.8M1690.3 630.2h-1.2M1690.3 641.1h1.2M1692.5 638.2V645.4M1692.5 642.2h-1.2M1692.5 643.5h1.2M1701.4 631.9V644.3M1701.4 635.3h-1.2M1701.4 639.9h1.2M1703.6 634.3V647.1M1703.6 640h-1.2M1703.6 641.8h1.2M1705.9 635.8V665M1705.9 641.6h-1.2M1705.9 647.7h1.2M1708.1 643.5V654.7M1708.1 646.8h-1.2M1708.1 651.8h1.2M1712.6 613.9V641.8M1712.6 638.5h-1.2M1712.6 640.3h1.2M1723.7 612.7V622.6M1723.7 614.2h-1.2M1723.7 616.1h1.2M1725.9 610.6V647.3M1725.9 615.4h-1.2M1725.9 626.9h1.2M1728.2 621.6V634.5M1728.2 628h-1.2M1728.2 631.3h1.2M1730.4 626.3V636.8M1730.4 630.5h-1.2M1730.4 631.9h1.2M1732.6 626.2V635.8M1732.6 631.2h-1.2M1732.6 631.5h1.2M1734.8 630V644.8M1734.8 632.6h-1.2M1734.8 634.7h1.2M1739.3 620.8V641.5M1739.3 631.7h-1.2M1739.3 637.3h1.2M1741.5 629.6V640.8M1741.5 637.1h-1.2M1741.5 638.3h1.2M1743.7 635.9V655M1743.7 639.6h-1.2M1743.7 649.8h1.2M1746 639.6V656.3M1746 648.3h-1.2M1746 654.6h1.2M1750.4 650.4V661.7M1750.4 652.3h-1.2M1750.4 658.6h1.2M1759.3 613.1V628.9M1759.3 617.3h-1.2M1759.3 626.4h1.2M1761.6 623.7V629M1761.6 626.9h-1.2M1761.6 627.5h1.2M1763.8 626.8V630.7M1763.8 628.5h-1.2M1763.8 628.5h1.2M1768.3 618.1V633.7M1768.3 623.3h-1.2M1768.3 625.2h1.2M1770.5 618.8V632.3M1770.5 626h-1.2M1770.5 627.4h1.2" stroke="#f07323" stroke-width="1.6" fill="none"/>
<path d="M45 497.6V504.6M45 500.3h-1.2M45 499.4h1.2M53.9 512.7V552.6M53.9 537.6h-1.2M53.9 516.1h1.2M56.2 494.5V519.6M56.2 517.6h-1.2M56.2 497.2h1.2M58.4 476.6V499.9M58.4 497.7h-1.2M58.4 484.1h1.2M67.3 495.5V505.7M67.3 503.2h-1.2M67.3 501.3h1.2M69.5 489.9V506.6M69.5 500.4h-1.2M69.5 498.9h1.2M71.7 484.7V501.8M71.7 498.4h-1.2M71.7 486.6h1.2M76.2 481.3V498.6M76.2 489.6h-1.2M76.2 485.8h1.2M82.9 475.7V495.7M82.9 490.5h-1.2M82.9 481.5h1.2M85.1 477.8V486.3M85.1 483h-1.2M85.1 480.5h1.2M96.2 498.9V510.8M96.2 507.7h-1.2M96.2 502.3h1.2M98.5 494.2V506M98.5 503.8h-1.2M98.5 496.3h1.2M109.6 517V528.2M109.6 524.9h-1.2M109.6 524.3h1.2M111.8 508.7V525.7M111.8 524h-1.2M111.8 513.8h1.2M114.1 509.5V517.3M114.1 514.3h-1.2M114.1 511.7h1.2M116.3 498.5V513.6M116.3 511.7h-1.2M116.3 500.5h1.2M118.5 479.7V505.4M118.5 500.4h-1.2M118.5 488.7h1.2M120.7 484.1V492.2M120.7 489h-1.2M120.7 487.2h1.2M123 468V492M123 488.3h-1.2M123 487.5h1.2M127.4 468.4V488.9M127.4 487.3h-1.2M127.4 470.5h1.2M129.7 460V475.8M129.7 471.5h-1.2M129.7 462.1h1.2M131.9 444V471.7M131.9 463.1h-1.2M131.9 459.3h1.2M143 452.6V480.2M143 478.6h-1.2M143 454.2h1.2M145.2 437.7V466.8M145.2 454h-1.2M145.2 443.5h1.2M147.5 417.2V454.4M147.5 441.7h-1.2M147.5 434.7h1.2M149.7 421.1V436.6M149.7 434.3h-1.2M149.7 423.5h1.2M158.6 422.6V433.2M158.6 430.3h-1.2M158.6 429.7h1.2M163.1 432.1V442.6M163.1 440.6h-1.2M163.1 434.2h1.2M165.3 426.7V437.3M165.3 435.2h-1.2M165.3 434.1h1.2M167.5 429.3V438.2M167.5 435.1h-1.2M167.5 434.7h1.2M169.8 412.7V448.5M169.8 434.3h-1.2M169.8 414.3h1.2M172 400.4V417.3M172 413.7h-1.2M172 411.6h1.2M174.2 404.3V415.2M174.2 412.7h-1.2M174.2 406.6h1.2M176.4 400.1V409.1M176.4 406.5h-1.2M176.4 404.8h1.2M180.9 396.1V411.9M180.9 408.4h-1.2M180.9 406.1h1.2M183.1 399.8V411M183.1 406.9h-1.2M183.1 404.1h1.2M185.3 393V406.4M185.3 404.9h-1.2M185.3 395.2h1.2M187.6 385.3V401.5M187.6 395.3h-1.2M187.6 389.1h1.2M189.8 375V392.8M189.8 388.4h-1.2M189.8 379.1h1.2M198.7 377.3V395.4M198.7 391.7h-1.2M198.7 383h1.2M203.2 380.7V395.6M203.2 391.1h-1.2M203.2 383.2h1.2M205.4 370.2V386.6M205.4 384.7h-1.2M205.4 372.2h1.2M207.6 365.4V373.7M207.6 371.9h-1.2M207.6 367.9h1.2M209.8 355.1V369.3M209.8 367.2h-1.2M209.8 364.7h1.2M212.1 352.8V373.7M212.1 364.5h-1.2M212.1 354.9h1.2M214.3 340V358.8M214.3 355.4h-1.2M214.3 352.5h1.2M225.4 359.1V383.6M225.4 376.5h-1.2M225.4 375.7h1.2M232.1 374.3V384M232.1 381.9h-1.2M232.1 376.9h1.2M234.4 361.6V379.6M234.4 377.8h-1.2M234.4 367.5h1.2M236.6 356.4V370.4M236.6 368.6h-1.2M236.6 359.9h1.2M238.8 349.5V362.7M238.8 360.9h-1.2M238.8 356.8h1.2M241 339V360.7M241 357h-1.2M241 347.7h1.2M243.3 334.2V349.7M243.3 347.1h-1.2M243.3 345.1h1.2M256.6 373.9V387M256.6 379.4h-1.2M256.6 375.8h1.2M258.9 364.9V378.3M258.9 375h-1.2M258.9 372.8h1.2M265.5 371.6V376.4M265.5 374.6h-1.2M265.5 373.6h1.2M270 367.9V380.7M270 378h-1.2M270 373.4h1.2M272.2 366.3V375.6M272.2 373.5h-1.2M272.2 370h1.2M276.7 359.9V378.2M276.7 375.4h-1.2M276.7 373.5h1.2M278.9 369.8V377.3M278.9 373.5h-1.2M278.9 373h1.2M290 382.5V407M290 390.4h-1.2M290 385.4h1.2M292.3 375.8V387.8M292.3 386.1h-1.2M292.3 381h1.2M296.7 375.5V391.2M296.7 387.2h-1.2M296.7 379.7h1.2M298.9 369.3V385.1M298.9 380.4h-1.2M298.9 377.1h1.2M301.2 358.5V380.5M301.2 378.1h-1.2M301.2 364.3h1.2M303.4 354.4V366.6M303.4 364.7h-1.2M303.4 357.5h1.2M305.6 340V363.1M305.6 358.1h-1.2M305.6 354.4h1.2M307.9 350.4V361.3M307.9 354h-1.2M307.9 351.9h1.2M319 372.9V384.6M319 379.4h-1.2M319 377.8h1.2M321.2 374.2V384.6M321.2 378.2h-1.2M321.2 376.8h1.2M325.7 370.5V385.8M325.7 380.2h-1.2M325.7 376.3h1.2M327.9 367.3V379.8M327.9 376h-1.2M327.9 371h1.2M330.1 365.2V387.5M330.1 372.3h-1.2M330.1 367.5h1.2M332.4 361.8V375.3M332.4 367.6h-1.2M332.4 365.5h1.2M334.6 354.7V368.7M334.6 366.4h-1.2M334.6 357.3h1.2M336.8 345.6V359.9M336.8 357.8h-1.2M336.8 350.2h1.2M339 342V355.9M339 348.3h-1.2M339 344h1.2M341.3 335.1V344.8M341.3 342.4h-1.2M341.3 341h1.2M343.5 337.4V343.2M343.5 341.7h-1.2M343.5 339h1.2M345.7 326.2V340.2M345.7 338.1h-1.2M345.7 336.2h1.2M352.4 336.5V346.4M352.4 343.2h-1.2M352.4 339.2h1.2M359.1 342.7V360.5M359.1 358h-1.2M359.1 354.1h1.2M361.3 349.9V357.2M361.3 354h-1.2M361.3 352.1h1.2M365.8 350.7V365.8M365.8 359.8h-1.2M365.8 355.1h1.2M368 351.4V362.9M368 356.3h-1.2M368 355.1h1.2M372.5 356.2V364.8M372.5 362.1h-1.2M372.5 359.2h1.2M376.9 352.2V365.9M376.9 363.7h-1.2M376.9 355.5h1.2M381.4 344.6V371.2M381.4 367.5h-1.2M381.4 366.4h1.2M385.8 358.3V373M385.8 368.5h-1.2M385.8 360.9h1.2M388 354.6V365.3M388 361.9h-1.2M388 358h1.2M390.3 348.8V359M390.3 357.3h-1.2M390.3 351.8h1.2M397 336V367.6M397 355h-1.2M397 339.7h1.2M401.4 332.8V347.2M401.4 342.5h-1.2M401.4 336.6h1.2M403.6 325.5V345.2M403.6 337.4h-1.2M403.6 336.4h1.2M417 370.1V392.9M417 391h-1.2M417 375.9h1.2M419.2 362.7V380.1M419.2 376.8h-1.2M419.2 367.4h1.2M421.5 356.7V370.4M421.5 367.6h-1.2M421.5 358.3h1.2M423.7 348.6V365.6M423.7 356.3h-1.2M423.7 353.8h1.2M425.9 342.7V366.4M425.9 353.2h-1.2M425.9 345.2h1.2M428.1 335.5V349M428.1 345h-1.2M428.1 337.1h1.2M430.4 329.9V342.2M430.4 336.7h-1.2M430.4 332.5h1.2M432.6 330.1V336M432.6 333h-1.2M432.6 331.7h1.2M439.3 325.5V336.3M439.3 333.9h-1.2M439.3 328h1.2M443.7 318.1V339.6M443.7 334.2h-1.2M443.7 321.5h1.2M446 316.7V324.3M446 322h-1.2M446 320h1.2M448.2 305V322.2M448.2 320.4h-1.2M448.2 306.7h1.2M450.4 288V311.6M450.4 305.3h-1.2M450.4 297.3h1.2M454.9 295.8V307.7M454.9 302.3h-1.2M454.9 297.4h1.2M457.1 292.8V299M457.1 296.8h-1.2M457.1 295.7h1.2M461.6 295.2V303.9M461.6 300.8h-1.2M461.6 297.5h1.2M466 279.6V302.9M466 300.6h-1.2M466 290.2h1.2M472.7 281.7V303.2M472.7 296.8h-1.2M472.7 284.3h1.2M477.1 279.2V291.1M477.1 288.2h-1.2M477.1 285.2h1.2M483.8 273.2V289.4M483.8 286.2h-1.2M483.8 285.8h1.2M492.7 297.9V305.6M492.7 303.4h-1.2M492.7 299.7h1.2M497.2 294.2V319.6M497.2 310.4h-1.2M497.2 309.9h1.2M503.9 308.1V321.2M503.9 314.7h-1.2M503.9 313.7h1.2M512.8 322.6V332.2M512.8 328.9h-1.2M512.8 325.5h1.2M515 317.7V333.9M515 326.5h-1.2M515 320.1h1.2M517.2 314.9V322.5M517.2 318.7h-1.2M517.2 316.7h1.2M519.5 294.2V319M519.5 317.4h-1.2M519.5 304.5h1.2M526.2 300.2V321.7M526.2 309.7h-1.2M526.2 307.1h1.2M541.7 333.2V342.4M541.7 339h-1.2M541.7 338.9h1.2M548.4 334.8V348.2M548.4 342h-1.2M548.4 337.1h1.2M555.1 335.8V345.9M555.1 340.7h-1.2M555.1 340.2h1.2M561.8 344V356.6M561.8 349.2h-1.2M561.8 347.9h1.2M575.2 354.8V371.8M575.2 369.9h-1.2M575.2 358h1.2M577.4 347.7V359.7M577.4 358h-1.2M577.4 357.4h1.2M579.6 349.2V364.2M579.6 356.1h-1.2M579.6 350.9h1.2M581.8 332.8V356.7M581.8 351.7h-1.2M581.8 337.1h1.2M584.1 329.7V340.3M584.1 336.8h-1.2M584.1 334.3h1.2M586.3 326.5V335.4M586.3 333.9h-1.2M586.3 330.1h1.2M588.5 318V336.1M588.5 329.4h-1.2M588.5 320.5h1.2M593 318.1V323.5M593 321.7h-1.2M593 321.7h1.2M599.7 322.9V343.1M599.7 330.7h-1.2M599.7 326.1h1.2M601.9 298.5V333.3M601.9 327.1h-1.2M601.9 319.9h1.2M606.3 319.5V332.7M606.3 325.7h-1.2M606.3 321.6h1.2M608.6 318.2V328.5M608.6 321.9h-1.2M608.6 321.2h1.2M610.8 315.3V329.8M610.8 322.2h-1.2M610.8 318h1.2M626.4 322.6V336.4M626.4 329.1h-1.2M626.4 325.9h1.2M628.6 320.9V328.8M628.6 325.6h-1.2M628.6 325.5h1.2M633.1 317.6V339.4M633.1 334.2h-1.2M633.1 320.1h1.2M637.5 315V326.9M637.5 322h-1.2M637.5 317h1.2M639.8 300.4V318.2M639.8 316.2h-1.2M639.8 310h1.2M642 303.5V311.7M642 310.2h-1.2M642 305.1h1.2M644.2 300.9V307.3M644.2 304.9h-1.2M644.2 304h1.2M646.4 297V308.1M646.4 303h-1.2M646.4 299.3h1.2M648.7 284.3V301.4M648.7 298.9h-1.2M648.7 295.7h1.2M655.3 304.3V315.6M655.3 310.3h-1.2M655.3 307.3h1.2M662 301.5V313.2M662 311.6h-1.2M662 308.4h1.2M666.5 302.5V316.9M666.5 309.4h-1.2M666.5 307.7h1.2M673.2 303.7V320.9M673.2 314.5h-1.2M673.2 307.5h1.2M675.4 298.2V309.4M675.4 306.9h-1.2M675.4 300.1h1.2M686.5 314.8V335.5M686.5 329.1h-1.2M686.5 317.3h1.2M688.8 314.7V327.7M688.8 318.5h-1.2M688.8 317.7h1.2M691 298.4V322.5M691 317.4h-1.2M691 308.5h1.2M693.2 288.7V311.9M693.2 308.1h-1.2M693.2 304.1h1.2M695.4 282V308.4M695.4 304.8h-1.2M695.4 290.5h1.2M697.7 284.9V292.7M697.7 290.3h-1.2M697.7 287.7h1.2M708.8 282.4V301.7M708.8 294.1h-1.2M708.8 290h1.2M711 281.3V300.6M711 290.2h-1.2M711 290.1h1.2M713.3 286.3V292.4M713.3 290.4h-1.2M713.3 288.6h1.2M715.5 278.8V295.2M715.5 290.1h-1.2M715.5 286.3h1.2M717.7 281.8V288.7M717.7 286.8h-1.2M717.7 284.5h1.2M719.9 274.4V288.5M719.9 285.6h-1.2M719.9 276.7h1.2M733.3 303.1V311.4M733.3 309.9h-1.2M733.3 305.3h1.2M740 301.3V315.8M740 313.3h-1.2M740 309.2h1.2M742.2 306.7V315.7M742.2 309.9h-1.2M742.2 309.1h1.2M748.9 303.3V319.1M748.9 309.6h-1.2M748.9 306.6h1.2M753.4 309.1V316.4M753.4 313.2h-1.2M753.4 313.1h1.2M757.8 301V318M757.8 314.9h-1.2M757.8 306.3h1.2M760 293.2V311.5M760 306.1h-1.2M760 301.4h1.2M764.5 302.1V316.1M764.5 306.8h-1.2M764.5 305.8h1.2M771.2 310.2V315.7M771.2 312.8h-1.2M771.2 312.4h1.2M789 362.9V376.5M789 373.1h-1.2M789 369.3h1.2M791.2 357.4V376.4M791.2 369.5h-1.2M791.2 366.6h1.2M795.7 357.1V371.6M795.7 369.7h-1.2M795.7 362.2h1.2M822.4 444.4V457.9M822.4 454.8h-1.2M822.4 450.2h1.2M824.6 441.2V461.8M824.6 450.2h-1.2M824.6 447.6h1.2M829.1 438V458.6M829.1 451.2h-1.2M829.1 444.9h1.2M846.9 507.7V526.9M846.9 515.9h-1.2M846.9 510.9h1.2M849.1 487.6V521M849.1 511h-1.2M849.1 495.4h1.2M851.4 480.9V500.6M851.4 495.5h-1.2M851.4 488.8h1.2M853.6 475.5V494.3M853.6 488.9h-1.2M853.6 487.9h1.2M864.7 524.7V538M864.7 533.7h-1.2M864.7 530.4h1.2M867 513V534.8M867 530.4h-1.2M867 522.3h1.2M869.2 508.3V526.1M869.2 522.2h-1.2M869.2 510.3h1.2M878.1 514.8V538.9M878.1 525.7h-1.2M878.1 518.3h1.2M880.3 508.9V520.9M880.3 519.3h-1.2M880.3 514h1.2M884.8 501.6V528.5M884.8 518.8h-1.2M884.8 505.4h1.2M887 496.4V509.7M887 506.7h-1.2M887 501.4h1.2M889.2 480V506.1M889.2 501.9h-1.2M889.2 497.5h1.2M900.4 536.8V549.8M900.4 544.6h-1.2M900.4 541.5h1.2M906.1 687.8V692.5M906.1 689.8h-1.2M906.1 689.5h1.2M910.5 668.5V698.7M910.5 693.8h-1.2M910.5 678.7h1.2M912.8 658.3V682.7M912.8 677.9h-1.2M912.8 664.1h1.2M915 647.2V667.3M915 663.6h-1.2M915 652.7h1.2M917.2 641.2V654M917.2 652.3h-1.2M917.2 649.3h1.2M932.8 686V709.5M932.8 705.7h-1.2M932.8 701.8h1.2M964 767.9V791.5M964 784.5h-1.2M964 779.9h1.2M966.2 773.7V794.2M966.2 779.6h-1.2M966.2 775.5h1.2M968.5 764.2V778.9M968.5 774h-1.2M968.5 767.1h1.2M970.7 759.5V769.8M970.7 766.9h-1.2M970.7 764.3h1.2M972.9 740.5V770.7M972.9 765h-1.2M972.9 743.7h1.2M975.2 728.3V745.4M975.2 742.7h-1.2M975.2 735.7h1.2M977.4 731.5V740.4M977.4 735.7h-1.2M977.4 735h1.2M979.6 724.7V741.4M979.6 733.5h-1.2M979.6 726.3h1.2M981.8 715.4V727.5M981.8 724.8h-1.2M981.8 719.9h1.2M986.3 713.2V729.8M986.3 722.6h-1.2M986.3 717.6h1.2M988.5 705.5V721.4M988.5 718.9h-1.2M988.5 716.7h1.2M990.8 709.4V718.3M990.8 715.9h-1.2M990.8 713.2h1.2M997.4 697.7V731.4M997.4 727.3h-1.2M997.4 707h1.2M999.7 696.1V709.4M999.7 707.1h-1.2M999.7 698.4h1.2M1001.9 693.2V704M1001.9 699.5h-1.2M1001.9 696.3h1.2M1004.1 691V698.5M1004.1 696.9h-1.2M1004.1 693.1h1.2M1008.6 694V705.1M1008.6 702.1h-1.2M1008.6 698.8h1.2M1010.8 689.5V717M1010.8 698.8h-1.2M1010.8 691.1h1.2M1013 672.9V693M1013 690.4h-1.2M1013 677.4h1.2M1015.3 650.4V683.3M1015.3 676.5h-1.2M1015.3 662.5h1.2M1017.5 627.5V662.3M1017.5 660.6h-1.2M1017.5 653h1.2M1019.7 651.7V655.2M1019.7 653.5h-1.2M1019.7 653.5h1.2M1028.6 674.9V685.5M1028.6 682.2h-1.2M1028.6 680.4h1.2M1037.5 681.5V707.8M1037.5 691.1h-1.2M1037.5 686.7h1.2M1039.8 677.7V698.5M1039.8 686.9h-1.2M1039.8 684.2h1.2M1042 667.5V690.2M1042 683.6h-1.2M1042 672.2h1.2M1044.2 663.1V674.6M1044.2 672.6h-1.2M1044.2 665.6h1.2M1046.4 653.7V667.8M1046.4 665.7h-1.2M1046.4 656.2h1.2M1048.7 648V658.4M1048.7 656.1h-1.2M1048.7 654h1.2M1053.1 615V661.2M1053.1 657.5h-1.2M1053.1 650h1.2M1073.2 719.8V729.7M1073.2 727.4h-1.2M1073.2 722.4h1.2M1075.4 693.6V735M1075.4 724.2h-1.2M1075.4 717.6h1.2M1082.1 726V730.2M1082.1 728.7h-1.2M1082.1 728.1h1.2M1093.2 734.7V749.5M1093.2 743.6h-1.2M1093.2 739.6h1.2M1113.3 761.8V777.5M1113.3 768.1h-1.2M1113.3 765h1.2M1115.5 751.8V769.6M1115.5 765.6h-1.2M1115.5 764.4h1.2M1117.7 741.5V765.9M1117.7 764.3h-1.2M1117.7 745.8h1.2M1120 739.8V747.5M1120 745.6h-1.2M1120 742h1.2M1122.2 732.7V745.4M1122.2 743.5h-1.2M1122.2 734.4h1.2M1124.4 730.8V738.7M1124.4 733.9h-1.2M1124.4 732.3h1.2M1126.6 725.9V733.8M1126.6 731.9h-1.2M1126.6 731.8h1.2M1131.1 733.2V742.5M1131.1 740.5h-1.2M1131.1 735.9h1.2M1144.5 739.1V761.1M1144.5 750.8h-1.2M1144.5 746.5h1.2M1151.2 761.3V768.6M1151.2 766.8h-1.2M1151.2 765.5h1.2M1160.1 773.8V785.5M1160.1 782.8h-1.2M1160.1 779.4h1.2M1162.3 766.9V781.5M1162.3 778.9h-1.2M1162.3 771.9h1.2M1171.2 781.5V789.3M1171.2 787.3h-1.2M1171.2 783.5h1.2M1173.4 781.5V786.8M1173.4 784.3h-1.2M1173.4 784.3h1.2M1177.9 783.1V801.2M1177.9 789.9h-1.2M1177.9 785.4h1.2M1180.1 774.8V789.5M1180.1 785.7h-1.2M1180.1 779.7h1.2M1182.3 775.4V784.4M1182.3 780.3h-1.2M1182.3 777.8h1.2M1184.6 771.4V781.6M1184.6 778.5h-1.2M1184.6 772.9h1.2M1186.8 765.9V776.4M1186.8 772.5h-1.2M1186.8 770.3h1.2M1189 757.8V779.4M1189 772.6h-1.2M1189 760.6h1.2M1193.5 757.6V768M1193.5 761.7h-1.2M1193.5 761.2h1.2M1195.7 744.2V767.9M1195.7 761.5h-1.2M1195.7 757.2h1.2M1197.9 751.1V763.4M1197.9 757.8h-1.2M1197.9 754.1h1.2M1200.2 738V757.2M1200.2 753.1h-1.2M1200.2 745.6h1.2M1202.4 736.7V748.2M1202.4 744.3h-1.2M1202.4 743.3h1.2M1204.6 728.2V744.1M1204.6 742.1h-1.2M1204.6 738.6h1.2M1206.8 725.2V743.2M1206.8 738.6h-1.2M1206.8 731.9h1.2M1209.1 715.9V735.4M1209.1 731.9h-1.2M1209.1 720.5h1.2M1226.9 761.9V769.4M1226.9 767.8h-1.2M1226.9 763.5h1.2M1231.4 764.2V787.5M1231.4 769.7h-1.2M1231.4 768.3h1.2M1235.8 759.5V781.1M1235.8 776.9h-1.2M1235.8 765.1h1.2M1238 756.8V770M1238 765.5h-1.2M1238 760.1h1.2M1240.3 728.1V763.3M1240.3 759.4h-1.2M1240.3 741.7h1.2M1242.5 714.2V745.1M1242.5 742.1h-1.2M1242.5 735.7h1.2M1244.7 728.6V738.3M1244.7 735.4h-1.2M1244.7 730.8h1.2M1249.2 730.8V759.6M1249.2 741.4h-1.2M1249.2 738.5h1.2M1251.4 732.3V740.7M1251.4 738h-1.2M1251.4 734.4h1.2M1253.6 723.9V736.6M1253.6 734.4h-1.2M1253.6 726.1h1.2M1255.9 720.2V745.1M1255.9 725.3h-1.2M1255.9 723.3h1.2M1258.1 717.4V730.2M1258.1 723.1h-1.2M1258.1 720.8h1.2M1260.3 710.8V724.8M1260.3 722h-1.2M1260.3 712.3h1.2M1262.5 701.4V713.7M1262.5 711.4h-1.2M1262.5 706.9h1.2M1264.8 692.9V712.1M1264.8 706.9h-1.2M1264.8 695.5h1.2M1267 682.9V698.4M1267 695h-1.2M1267 687.4h1.2M1273.7 697.1V704.4M1273.7 702.9h-1.2M1273.7 698.8h1.2M1284.8 713.9V725.8M1284.8 724.2h-1.2M1284.8 716.4h1.2M1289.3 720.8V740M1289.3 726.9h-1.2M1289.3 725.6h1.2M1291.5 714.1V728.9M1291.5 725.6h-1.2M1291.5 716.6h1.2M1296 708.3V722M1296 719.8h-1.2M1296 710.8h1.2M1311.6 724.8V738.8M1311.6 730.8h-1.2M1311.6 728.4h1.2M1316 723.3V743.5M1316 731.1h-1.2M1316 725.6h1.2M1327.1 736.2V747.6M1327.1 742.2h-1.2M1327.1 739.4h1.2M1329.4 734.6V740.9M1329.4 739.1h-1.2M1329.4 737.9h1.2M1336.1 749.4V757.9M1336.1 755.5h-1.2M1336.1 752.2h1.2M1342.7 754.3V762.5M1342.7 756.9h-1.2M1342.7 756h1.2M1360.6 787.1V800.7M1360.6 799.2h-1.2M1360.6 790.1h1.2M1365 782.2V793M1365 790.5h-1.2M1365 783.8h1.2M1367.2 780V795.1M1367.2 784.8h-1.2M1367.2 782.3h1.2M1369.5 772.2V785.3M1369.5 782h-1.2M1369.5 778h1.2M1380.6 780.9V792.9M1380.6 791.3h-1.2M1380.6 787.5h1.2M1382.8 777.8V790.5M1382.8 786.2h-1.2M1382.8 780.4h1.2M1387.3 776.6V785.5M1387.3 783.2h-1.2M1387.3 780h1.2M1389.5 767V785.9M1389.5 780.4h-1.2M1389.5 772.9h1.2M1391.8 762.9V777.1M1391.8 773.5h-1.2M1391.8 767.1h1.2M1394 752.7V776M1394 766.8h-1.2M1394 755.5h1.2M1396.2 743.5V763.9M1396.2 756.3h-1.2M1396.2 746.5h1.2M1398.4 732.9V751.5M1398.4 746.1h-1.2M1398.4 735h1.2M1405.1 732.1V743.1M1405.1 737.2h-1.2M1405.1 734.4h1.2M1407.3 725.2V738.3M1407.3 734.5h-1.2M1407.3 728.1h1.2M1409.6 724.7V730M1409.6 728.5h-1.2M1409.6 726.4h1.2M1434.1 770.3V781.7M1434.1 776.6h-1.2M1434.1 774.8h1.2M1436.3 761.8V785.6M1436.3 773.6h-1.2M1436.3 771.8h1.2M1438.5 764.7V774.6M1438.5 771.8h-1.2M1438.5 766.8h1.2M1443 764.6V772.8M1443 771.1h-1.2M1443 766.5h1.2M1449.7 759.6V780.4M1449.7 776.9h-1.2M1449.7 763.7h1.2M1451.9 752V772.3M1451.9 764.5h-1.2M1451.9 757.5h1.2M1454.1 752.8V760.8M1454.1 757.2h-1.2M1454.1 755.6h1.2M1456.4 745.5V757.1M1456.4 755.3h-1.2M1456.4 747.8h1.2M1463 745.3V761.4M1463 756.5h-1.2M1463 750.8h1.2M1465.3 734.5V755.7M1465.3 751.8h-1.2M1465.3 746.9h1.2M1467.5 740.6V755.7M1467.5 746.4h-1.2M1467.5 743.6h1.2M1474.2 735.7V751.8M1474.2 748.4h-1.2M1474.2 740.2h1.2M1480.9 734.1V748.5M1480.9 744h-1.2M1480.9 738h1.2M1487.5 739.6V762.5M1487.5 745.9h-1.2M1487.5 744h1.2M1500.9 745.7V765.2M1500.9 760.2h-1.2M1500.9 755.1h1.2M1503.1 742V763.2M1503.1 754.3h-1.2M1503.1 752.5h1.2M1505.4 739.7V760.4M1505.4 753.7h-1.2M1505.4 742.7h1.2M1507.6 724.6V744.6M1507.6 741.4h-1.2M1507.6 726.6h1.2M1509.8 710.9V726.3M1509.8 724.6h-1.2M1509.8 717h1.2M1512.1 702.2V724.1M1512.1 716.8h-1.2M1512.1 706.6h1.2M1516.5 703.9V720.9M1516.5 716.2h-1.2M1516.5 712h1.2M1518.7 706V719.4M1518.7 712.1h-1.2M1518.7 707.9h1.2M1521 704.6V714.6M1521 708.9h-1.2M1521 707.4h1.2M1523.2 695.1V712M1523.2 707.7h-1.2M1523.2 704.1h1.2M1541 726.4V736.9M1541 733.9h-1.2M1541 729.6h1.2M1545.5 714.7V734.7M1545.5 732.7h-1.2M1545.5 716.4h1.2M1549.9 718V735.3M1549.9 722.5h-1.2M1549.9 722.2h1.2M1552.2 713V729M1552.2 722.2h-1.2M1552.2 717.5h1.2M1554.4 706.2V721.6M1554.4 716.5h-1.2M1554.4 711.4h1.2M1556.6 684V720.8M1556.6 711.8h-1.2M1556.6 691.3h1.2M1558.8 683.3V697.5M1558.8 690.8h-1.2M1558.8 686.1h1.2M1561.1 671.3V688.2M1561.1 685.2h-1.2M1561.1 676.4h1.2M1563.3 671.1V679.1M1563.3 676.1h-1.2M1563.3 672.8h1.2M1572.2 676V689M1572.2 687.3h-1.2M1572.2 678.2h1.2M1574.4 670.5V683.2M1574.4 678.8h-1.2M1574.4 676.7h1.2M1576.7 665.5V681.1M1576.7 676.4h-1.2M1576.7 676.2h1.2M1578.9 664.8V693.7M1578.9 676.4h-1.2M1578.9 669.4h1.2M1581.1 657.8V679.3M1581.1 670.5h-1.2M1581.1 661.4h1.2M1585.6 657.9V668.4M1585.6 665.8h-1.2M1585.6 660h1.2M1587.8 653.2V661.8M1587.8 659.5h-1.2M1587.8 656.6h1.2M1590 644.6V657.9M1590 655.6h-1.2M1590 649.8h1.2M1605.6 662.8V672.4M1605.6 669.8h-1.2M1605.6 667.6h1.2M1610.1 668.4V680.8M1610.1 674.6h-1.2M1610.1 673.3h1.2M1612.3 661.8V675.7M1612.3 673.6h-1.2M1612.3 663.9h1.2M1614.5 653.1V667M1614.5 663.5h-1.2M1614.5 660.7h1.2M1616.8 647.5V665.8M1616.8 660.4h-1.2M1616.8 652h1.2M1619 638.2V654.1M1619 651.5h-1.2M1619 644.6h1.2M1621.2 632.1V646.1M1621.2 643.3h-1.2M1621.2 639h1.2M1623.4 633V639.5M1623.4 636.8h-1.2M1623.4 636.7h1.2M1625.7 626.6V637.9M1625.7 636.4h-1.2M1625.7 628.6h1.2M1632.4 624V633.7M1632.4 629.7h-1.2M1632.4 625.7h1.2M1634.6 609.6V628.7M1634.6 625.5h-1.2M1634.6 621.2h1.2M1639 612.8V625M1639 622.5h-1.2M1639 619.8h1.2M1641.3 613V622.7M1641.3 619.7h-1.2M1641.3 618.1h1.2M1643.5 610.5V627.2M1643.5 617.3h-1.2M1643.5 613.4h1.2M1648 609V621.3M1648 616.8h-1.2M1648 610.7h1.2M1650.2 597.7V616.7M1650.2 611.7h-1.2M1650.2 609.7h1.2M1652.4 598.8V613.8M1652.4 610.3h-1.2M1652.4 610.2h1.2M1656.9 621.3V630.1M1656.9 625.5h-1.2M1656.9 623.6h1.2M1661.3 613V630.4M1661.3 627.4h-1.2M1661.3 615.7h1.2M1663.5 608.6V621.5M1663.5 615.8h-1.2M1663.5 610.7h1.2M1672.5 623V644M1672.5 629.3h-1.2M1672.5 624.9h1.2M1676.9 620.4V631.6M1676.9 629.8h-1.2M1676.9 626.1h1.2M1683.6 630.7V637.9M1683.6 635.5h-1.2M1683.6 634.7h1.2M1685.8 629.5V653.3M1685.8 634.9h-1.2M1685.8 631.1h1.2M1688.1 627.6V636.5M1688.1 632.6h-1.2M1688.1 629.6h1.2M1694.7 625.4V647.3M1694.7 644.2h-1.2M1694.7 635.9h1.2M1697 628.5V644.2M1697 638h-1.2M1697 637.7h1.2M1699.2 632.4V640M1699.2 638.2h-1.2M1699.2 635.1h1.2M1710.3 635V656.1M1710.3 652.9h-1.2M1710.3 638.2h1.2M1714.8 628.5V644.1M1714.8 639.2h-1.2M1714.8 631.1h1.2M1717 623.2V633.4M1717 631.5h-1.2M1717 625.5h1.2M1719.2 611.7V626M1719.2 624.3h-1.2M1719.2 621.8h1.2M1721.5 602.5V625.5M1721.5 621.1h-1.2M1721.5 612.3h1.2M1737.1 627.1V638.7M1737.1 634.9h-1.2M1737.1 631.3h1.2M1748.2 644.2V657.6M1748.2 655.6h-1.2M1748.2 651.8h1.2M1752.7 636.6V659.5M1752.7 657.7h-1.2M1752.7 640.3h1.2M1754.9 614.3V645.6M1754.9 642h-1.2M1754.9 620.1h1.2M1757.1 611.3V622.4M1757.1 620.3h-1.2M1757.1 618h1.2M1766 606.2V630.4M1766 627.9h-1.2M1766 623.6h1.2M1772.7 617.9V630.7M1772.7 627.6h-1.2M1772.7 621.5h1.2" stroke="#7da6ce" stroke-width="1.6" fill="none"/>
<path d="M540.8 306h6v11.2h5l-8 10.3l-8 -10.3h5z" fill="#f00"/>
<path d="M639.5 311l8 11h-5v12h-6v-12h-5z" fill="#32c832"/>
<path d="M772.7 294h6v10.9h5l-8 10.1l-8 -10.1h5z" fill="#f00"/>
<path d="M1000.8 711l8 9.6h-5v10.4h-6v-10.4h-5z" fill="#32c832"/>
<path d="M1072.8 687.5h6v11.2h5l-8 10.3l-8 -10.3h5z" fill="#f00"/>
<path d="M1257 734l8 9.6h-5v10.4h-6v-10.4h-5z" fill="#32c832"/>
<path d="M1329 719h6v10.9h5l-8 10.1l-8 -10.1h5z" fill="#f00"/>
<path d="M1394.2 760l8 10.1h-5v10.9h-6v-10.9h-5z" fill="#32c832"/>
<path d="M1854.8 223V859M1854.8 230.2h4M1854.8 236.2h4M1854.8 242.2h11M1854.8 248.2h4M1854.8 254.2h4M1854.8 260.2h4M1854.8 266.2h4M1854.8 272.2h11M1854.8 278.2h4M1854.8 284.2h4M1854.8 290.2h4M1854.8 296.2h4M1854.8 302.2h11M1854.8 308.2h4M1854.8 314.2h4M1854.8 320.2h4M1854.8 326.2h4M1854.8 332.2h11M1854.8 338.2h4M1854.8 344.2h4M1854.8 350.2h4M1854.8 356.2h4M1854.8 362.2h11M1854.8 368.2h4M1854.8 374.2h4M1854.8 380.2h4M1854.8 386.2h4M1854.8 392.2h11M1854.8 398.2h4M1854.8 404.2h4M1854.8 410.2h4M1854.8 416.2h4M1854.8 422.2h11M1854.8 428.2h4M1854.8 434.2h4M1854.8 440.2h4M1854.8 446.2h4M1854.8 452.2h11M1854.8 458.2h4M1854.8 464.2h4M1854.8 470.2h4M1854.8 476.2h4M1854.8 482.2h11M1854.8 488.2h4M1854.8 494.2h4M1854.8 500.2h4M1854.8 506.2h4M1854.8 512.2h11M1854.8 518.2h4M1854.8 524.2h4M1854.8 530.2h4M1854.8 536.2h4M1854.8 542.2h11M1854.8 548.2h4M1854.8 554.2h4M1854.8 560.2h4M1854.8 566.2h4M1854.8 572.2h11M1854.8 578.2h4M1854.8 584.2h4M1854.8 590.2h4M1854.8 596.2h4M1854.8 602.2h11M1854.8 608.2h4M1854.8 614.2h4M1854.8 620.2h4M1854.8 626.2h4M1854.8 632.2h11M1854.8 638.2h4M1854.8 644.2h4M1854.8 650.2h4M1854.8 656.2h4M1854.8 662.2h11M1854.8 668.2h4M1854.8 674.2h4M1854.8 680.2h4M1854.8 686.2h4M1854.8 692.2h11M1854.8 698.2h4M1854.8 704.2h4M1854.8 710.2h4M1854.8 716.2h4M1854.8 722.2h11M1854.8 728.2h4M1854.8 734.2h4M1854.8 740.2h4M1854.8 746.2h4M1854.8 752.2h11M1854.8 758.2h4M1854.8 764.2h4M1854.8 770.2h4M1854.8 776.2h4M1854.8 782.2h11M1854.8 788.2h4M1854.8 794.2h4M1854.8 800.2h4M1854.8 806.2h4M1854.8 812.2h11M1854.8 818.2h4M1854.8 824.2h4M1854.8 830.2h4M1854.8 836.2h4M1854.8 842.2h11M1854.8 848.2h4M1854.8 854.2h4" stroke="#fff" stroke-width="1.1" fill="none"/>
<text x="1874" y="247.1" font-size="15.2" fill="#fff">413.5</text>
<text x="1874" y="277.1" font-size="15.2" fill="#fff">413.0</text>
<text x="1874" y="307.1" font-size="15.2" fill="#fff">412.5</text>
<text x="1874" y="337.1" font-size="15.2" fill="#fff">412.0</text>
<text x="1874" y="367.1" font-size="15.2" fill="#fff">411.5</text>
<text x="1874" y="397.1" font-size="15.2" fill="#fff">411.0</text>
<text x="1874" y="427.1" font-size="15.2" fill="#fff">410.5</text>
<text x="1874" y="457.1" font-size="15.2" fill="#fff">410.0</text>
<text x="1874" y="487.1" font-size="15.2" fill="#fff">409.5</text>
<text x="1874" y="517.1" font-size="15.2" fill="#fff">409.0</text>
<text x="1874" y="547.1" font-size="15.2" fill="#fff">408.5</text>
<text x="1874" y="577.1" font-size="15.2" fill="#fff">408.0</text>
<text x="1874" y="607.1" font-size="15.2" fill="#fff">407.5</text>
<text x="1874" y="637.1" font-size="15.2" fill="#fff">407.0</text>
<text x="1874" y="667.1" font-size="15.2" fill="#fff">406.5</text>
<text x="1874" y="697.1" font-size="15.2" fill="#fff">406.0</text>
<text x="1874" y="727.1" font-size="15.2" fill="#fff">405.5</text>
<text x="1874" y="757.1" font-size="15.2" fill="#fff">405.0</text>
<text x="1874" y="787.1" font-size="15.2" fill="#fff">404.5</text>
<text x="1874" y="817.1" font-size="15.2" fill="#fff">404.0</text>
<text x="1874" y="847.1" font-size="15.2" fill="#fff">403.5</text>
<rect x="1858.5" y="604.5" width="59" height="19" fill="#000" stroke="#fff" stroke-width="1.2"/>
<text x="1861" y="619" font-size="12.6" fill="#00e000" textLength="55" lengthAdjust="spacingAndGlyphs">407.2400</text>
<path d="M44 884.5H1854.5M44 904.5H1854.5" stroke="#fff" stroke-width="1.2"/>
<text x="104" y="900" font-size="15.2" fill="#fff">10h</text>
<text x="237.6" y="900" font-size="15.2" fill="#fff">11h</text>
<text x="371.2" y="900" font-size="15.2" fill="#fff">12h</text>
<text x="504.9" y="900" font-size="15.2" fill="#fff">13h</text>
<text x="638.5" y="900" font-size="15.2" fill="#fff">14h</text>
<text x="772.1" y="900" font-size="15.2" fill="#fff">15h</text>
<text x="905.7" y="900" font-size="15.2" fill="#fff">16h</text>
<text x="974" y="900" font-size="15.2" fill="#fff">10h</text>
<text x="1107.7" y="900" font-size="15.2" fill="#fff">11h</text>
<text x="1241.3" y="900" font-size="15.2" fill="#fff">12h</text>
<text x="1375" y="900" font-size="15.2" fill="#fff">13h</text>
<text x="1508.7" y="900" font-size="15.2" fill="#fff">14h</text>
<text x="1642.3" y="900" font-size="15.2" fill="#fff">15h</text>
<text x="1776" y="900" font-size="15.2" fill="#fff">16h</text>
<path d="M101.2 884.5V904.5M234.8 884.5V904.5M368.4 884.5V904.5M502.1 884.5V904.5M635.7 884.5V904.5M769.3 884.5V904.5M902.9 884.5V904.5M971.2 884.5V904.5M1104.9 884.5V904.5M1238.5 884.5V904.5M1372.2 884.5V904.5M1505.9 884.5V904.5M1639.5 884.5V904.5M1773.2 884.5V904.5M1854 884.5V924" stroke="#fff" stroke-width="1.2"/>
<path d="M904.5 904.5V909" stroke="#fff" stroke-width="1"/>
<text x="908" y="919.8" font-size="15.2" fill="#fff">17</text>
<clipPath id="cl"><rect x="44" y="884" width="200" height="42"/></clipPath>
<g clip-path="url(#cl)"><text x="39.5" y="900" font-size="15.2" fill="#fff">09:31</text><text x="39.8" y="919.8" font-size="15.2" fill="#fff">2023</text></g>
<rect x="1856" y="886" width="60" height="39" fill="#e9e9e9" stroke="#cfcfcf" stroke-width="1"/>
<g stroke="#18a018" fill="none" stroke-width="1.4"><circle cx="1884.5" cy="903.5" r="10"/><path d="M1878.5 906q6 6.5 12 0"/></g><circle cx="1880.7" cy="900.5" r="1.4" fill="#18a018"/><circle cx="1888.3" cy="900.5" r="1.4" fill="#18a018"/>
<rect x="1918" y="96" width="2" height="860" fill="#ddd"/>
</svg>
<svg class="abs" style="left:0;top:0" width="1920" height="1080" viewBox="0 0 1920 1080" font-family="Liberation Sans, sans-serif">
<path d="M6 14v-4M8.300 14v-7M10.600 14v-10" stroke="#f08020" stroke-width="1.800"/>
<text x="12.5" y="13.8" font-size="21.5" fill="#e2e2e2" textLength="90" lengthAdjust="spacingAndGlyphs">MetaStock</text>
<text x="775" y="18" font-size="14.5" fill="#f4f4f4" textLength="476" lengthAdjust="spacingAndGlyphs" xml:space="preserve">[S&amp;P 500 SAR 2023 1M.mwc - [SPY] SPDR S&amp;P 500]&#160;&#160; 407.2400 (+0.15500)</text>
<text x="1755.5" y="18.3" font-size="14.8" fill="#f4f4f4" textLength="58.5" lengthAdjust="spacingAndGlyphs">1 Minute</text>
<rect x="1823.500" y="-3" width="89" height="18.500" rx="3" fill="#333" stroke="#8a8a8a" stroke-width="1"/>
<path d="M1853 0v15M1883 0v15" stroke="#6a6a6a" stroke-width="1"/>
<path d="M1832 10.500h11" stroke="#d8d8d8" stroke-width="2"/>
<path d="M1863.500 9.500v-6h9v6h-3M1860.500 6.500h8.500v5.500h-8.500z" fill="none" stroke="#d8d8d8" stroke-width="1.600"/>
<path d="M1893 0l9 8.500M1902 0l-9 8.500" stroke="#d8d8d8" stroke-width="2.200"/>
<text x="8.8" y="46.3" font-size="14.3" fill="#1e1e1e" textLength="20" lengthAdjust="spacingAndGlyphs">File</text>
<path d="M8.8 48.700H15.8" stroke="#1e1e1e" stroke-width="1"/>
<text x="46.3" y="46.3" font-size="14.3" fill="#1e1e1e" textLength="22.5" lengthAdjust="spacingAndGlyphs">Edit</text>
<path d="M46.3 48.700H54.3" stroke="#1e1e1e" stroke-width="1"/>
<text x="85.8" y="46.3" font-size="14.3" fill="#1e1e1e" textLength="29.2" lengthAdjust="spacingAndGlyphs">View</text>
<path d="M85.8 48.700H94.5" stroke="#1e1e1e" stroke-width="1"/>
<text x="132.5" y="46.3" font-size="14.3" fill="#1e1e1e" textLength="32.5" lengthAdjust="spacingAndGlyphs">Insert</text>
<path d="M132.8 48.700H135.3" stroke="#1e1e1e" stroke-width="1"/>
<text x="183" y="46.3" font-size="14.3" fill="#1e1e1e" textLength="39.5" lengthAdjust="spacingAndGlyphs">Format</text>
<path d="M190.8 48.700H198.5" stroke="#1e1e1e" stroke-width="1"/>
<text x="240" y="46.3" font-size="14.3" fill="#1e1e1e" textLength="32.5" lengthAdjust="spacingAndGlyphs">Tools</text>
<path d="M240 48.700H248" stroke="#1e1e1e" stroke-width="1"/>
<text x="290" y="46.3" font-size="14.3" fill="#1e1e1e" textLength="48.8" lengthAdjust="spacingAndGlyphs">Window</text>
<path d="M290 48.700H303" stroke="#1e1e1e" stroke-width="1"/>
<text x="356.3" y="46.3" font-size="14.3" fill="#1e1e1e" textLength="27.5" lengthAdjust="spacingAndGlyphs">Help</text>
<path d="M356.3 48.700H366" stroke="#1e1e1e" stroke-width="1"/>
<rect x="1850.500" y="34.500" width="62.500" height="15.500" rx="2" fill="#dbe7f3" stroke="#9fb4c8" stroke-width="1"/>
<path d="M1871 35v15M1892 35v15" stroke="#b4c4d4" stroke-width="1"/>
<path d="M1856 46h10" stroke="#2f4f6f" stroke-width="2"/>
<path d="M1880.500 42v-4h7.500v5h-3M1876 41.500h7.500v5h-7.500z" fill="none" stroke="#2f4f6f" stroke-width="1.600"/>
<path d="M1898.500 38l8 7.500M1906.500 38l-8 7.500" stroke="#2f4f6f" stroke-width="2.200"/>
<defs><linearGradient id="gripg" x1="0" x2="1"><stop offset="0" stop-color="#e6e6e6"/><stop offset="1" stop-color="#bdbdbd"/></linearGradient><linearGradient id="pg" x1="0" y1="0" x2="1" y2="1"><stop offset="0" stop-color="#e07a2a"/><stop offset=".45" stop-color="#8a3a1c"/><stop offset="1" stop-color="#c2441c"/></linearGradient><linearGradient id="docg" x1="0" y1="0" x2="1" y2="1"><stop offset="0" stop-color="#d8ecf8"/><stop offset="1" stop-color="#7fbfe4"/></linearGradient><linearGradient id="savg" x1="0" y1="0" x2="0" y2="1"><stop offset="0" stop-color="#f4f4f4"/><stop offset="1" stop-color="#a8a8a8"/></linearGradient><linearGradient id="btng" x1="0" y1="0" x2="1" y2="1"><stop offset="0" stop-color="#ffffff"/><stop offset="1" stop-color="#c4c4c4"/></linearGradient><linearGradient id="grng" x1="0" y1="0" x2="0" y2="1"><stop offset="0" stop-color="#7fb87f"/><stop offset="1" stop-color="#3f7f3f"/></linearGradient></defs>
<rect x="11.2" y="63.7" width="25" height="25" fill="url(#pg)"/>
<path d="M12 80q8 -10 16 -4t8 -6" stroke="#f2a060" stroke-width="1" fill="none" opacity=".7"/>
<text x="17.2" y="83" font-size="19" font-weight="bold" fill="#fff" font-family="Liberation Sans, sans-serif">P</text>
<path d="M49.5 56V94" stroke="#9a9a9a" stroke-width="1.4"/>
<rect x="57.5" y="57" width="8" height="37" fill="url(#gripg)"/><path d="M66 57V94" stroke="#8a8a8a" stroke-width="1"/><rect x="61" y="75" width="3" height="3" fill="#555"/>
<path d="M75 65.5h12.5l5.5 5.5v15.5h-18z" fill="#f4f4f4" stroke="#6e6e6e" stroke-width="1.4" stroke-linejoin="round"/>
<path d="M77.5 68h9.5l3.5 4v12h-13z" fill="url(#docg)"/><path d="M87.5 65.5v5.5h5.5" fill="#fff" stroke="#6e6e6e" stroke-width="1"/>
<path d="M108.5 83.5v-14h7l2 2.5h7.5v4" fill="#f8f8f8" stroke="#707070" stroke-width="1.3" stroke-linejoin="round"/>
<path d="M108.5 84l5-8h15.5l-4.5 8z" fill="#9cc4e4" stroke="#606870" stroke-width="1.3" stroke-linejoin="round"/>
<rect x="140.7" y="65.5" width="21.5" height="21.5" rx="2" fill="url(#savg)" stroke="#6e6e6e" stroke-width="1.4"/>
<rect x="145" y="66.5" width="13" height="9.5" fill="#f4a0a8"/><rect x="146" y="79.5" width="11" height="7" fill="#8c8c8c"/><rect x="153.5" y="81" width="2.5" height="4.5" fill="#eee"/>
<path d="M172 62.5V89.5" stroke="#8f8f8f" stroke-width="1.4"/>
<rect x="182" y="67" width="21" height="9.5" rx="1.5" fill="#f6f6f6" stroke="#6e6e6e" stroke-width="1.3"/>
<rect x="185.8" y="74" width="13.5" height="12.5" fill="#eef6ee" stroke="#6e6e6e" stroke-width="1.3"/>
<path d="M188 78.5h7M188 81.5h4M188 84h8" stroke="#666" stroke-width="1"/><circle cx="199.8" cy="70" r="1.1" fill="#5cb85c"/>
<rect x="215.5" y="65.5" width="14" height="17" fill="#f0f0f0" stroke="#c8c8c8"/>
<circle cx="225.5" cy="74.5" r="5.8" fill="#a8d0ee" stroke="#3a3a3a" stroke-width="2"/><path d="M229.8 79.2l5.7 6.3" stroke="#3a3a3a" stroke-width="3" stroke-linecap="round"/>
<path d="M247 62.5V89.5" stroke="#8f8f8f" stroke-width="1.4"/>
<path d="M261.5 66.5l9.5 14M273.5 66.5l-9.5 14" stroke="#5a5a5a" stroke-width="2.4" stroke-linecap="round"/>
<circle cx="262.3" cy="82.3" r="2.9" fill="none" stroke="#5a5a5a" stroke-width="1.8"/><circle cx="272.7" cy="82.3" r="2.9" fill="none" stroke="#5a5a5a" stroke-width="1.8"/>
<path d="M290.8 66h8.5l3 3v11.5h-11.5z" fill="#f2f2f2" stroke="#707070" stroke-width="1.2"/><path d="M293 71h6M293 73.500h7M293 76h7" stroke="#999" stroke-width="1"/>
<path d="M300.5 72.500h8.500l3 3v11h-11.500z" fill="#f2f2f2" stroke="#707070" stroke-width="1.2"/><path d="M303 78h5M303 80.500h7M303 83h7" stroke="#999" stroke-width="1"/>
<rect x="325.5" y="68" width="20" height="18.500" rx="1.5" fill="#e8e4d8" stroke="#707070" stroke-width="1.3"/>
<rect x="328.5" y="72.500" width="14" height="12.500" fill="#fbfbfb"/><path d="M330.500 75h10M330.500 78h6M330.500 81.500h10" stroke="#aaa" stroke-width="1"/>
<rect x="330.500" y="64.500" width="10" height="7" rx="1.5" fill="#f4d24a" stroke="#c8a020" stroke-width="1"/><rect x="333" y="66.500" width="5" height="1.600" fill="#555"/>
<path d="M355.5 62.5V89.5" stroke="#8f8f8f" stroke-width="1.4"/>
<path d="M367.500 73.500l9.500 -6v4.500q9.500 0.500 9 8.500q-1 5.500 -8 6q4.500 -2 4 -5.500q-0.500 -3.500 -5 -3.500v4z" fill="url(#grng)"/>
<path d="M397 62.5V89.5" stroke="#8f8f8f" stroke-width="1.4"/>
<circle cx="417.500" cy="76.300" r="7.300" fill="#f4eef2" stroke="#2f8fd0" stroke-width="2"/><path d="M405 76.300h25M417.500 63.800v25" stroke="#2f8fd0" stroke-width="1.900"/>
<rect x="439.500" y="66" width="12.500" height="12.500" fill="#e6e6e6" stroke="#555" stroke-width="1.500" stroke-dasharray="1.700 1.300"/>
<circle cx="451.800" cy="75.500" r="5.300" fill="#a8d0ee" stroke="#3a3a3a" stroke-width="1.900"/><path d="M455.800 79.800l5.700 6.400" stroke="#3a3a3a" stroke-width="2.800" stroke-linecap="round"/>
<path d="M472 62.5V89.5" stroke="#8f8f8f" stroke-width="1.4"/>
<rect x="477" y="62.500" width="217.500" height="27" rx="2" fill="#fff" stroke="#8e8e8e" stroke-width="1.200"/>
<rect x="482.500" y="68.500" width="16" height="16" fill="#1f66c8" stroke="#9ab8e0" stroke-width="1"/><text x="488" y="81.500" font-size="13" font-style="italic" font-weight="bold" fill="#fff" font-family="Liberation Serif, serif">f</text>
<text x="502.500" y="81.300" font-size="14.500" fill="#1a1a1a" font-family="Liberation Sans, sans-serif" textLength="62" lengthAdjust="spacingAndGlyphs">SAR 2023</text>
<path d="M680 73.500l4.800 5l4.800 -5" fill="none" stroke="#444" stroke-width="1.300"/>
<path d="M699.5 62.5V89.5" stroke="#8f8f8f" stroke-width="1.4"/>
<ellipse cx="719.500" cy="72.500" rx="10.500" ry="2.800" fill="#3c3c3c"/><path d="M712.500 72.500q0 -8.500 7 -8.500t7 8.500z" fill="#4a4a4a"/>
<path d="M713.500 74.500h12v5.500q-1 6 -6 6.500q-5 -0.500 -6 -6.500z" fill="#f2d2bc" stroke="#7a5a4a" stroke-width=".8"/><circle cx="717" cy="78" r="1" fill="#333"/><circle cx="722" cy="78" r="1" fill="#333"/><path d="M715 75.500h9" stroke="#9ab" stroke-width="1.500"/>
<text x="744.500" y="85" font-size="27" font-style="italic" fill="#c83a78" font-family="Liberation Serif, serif">f</text><text x="754.500" y="86.500" font-size="8.500" fill="#c83a78" font-family="Liberation Serif, serif">(x)</text>
<text x="779.500" y="86" font-size="27" fill="#1f8a1f" font-family="Liberation Serif, serif" font-weight="bold">$</text>
<path d="M812 72.500l2.500 -6.500h4l1 6.500v11.500h-9.500v-7zM830.500 72.500l-2.500 -6.500h-4l-1 6.500v11.500h9.500v-7z" fill="#5f5f5f"/><rect x="818.500" y="72" width="6" height="6" fill="#3a3a3a"/><path d="M811 84.500h8.500M823.500 84.500h8.500" stroke="#c8a030" stroke-width="2"/>
<path d="M852 72.500h7.500v-4l8.500 7.500l-8.500 7.500v-4h-7.500z" fill="#2f9ae8"/><path d="M843 72.800v6.500M845.500 72.800v6.500M848 72.800v6.500M850.300 72.800v6.500" stroke="#2f9ae8" stroke-width="1.200"/>
<rect x="878.500" y="78" width="20.500" height="8.500" rx="1" fill="#f2f2f2" stroke="#6a6a6a" stroke-width="1.300"/><path d="M881 83.500h13" stroke="#888" stroke-width="1"/><circle cx="896" cy="81" r=".9" fill="#4a4"/>
<path d="M886.500 64h4.500v6h3.500l-5.800 6.500l-5.700 -6.500h3.500z" fill="#2f8fd8"/>
<rect x="918.500" y="64.500" width="6" height="13" rx="1.500" fill="#7a7a8a"/><path d="M912.500 86.500h19" stroke="#2878d0" stroke-width="2"/><path d="M914.500 82.500h11q5.500 -1 5 -7q-0.500 -3 -3.500 -4.500" fill="none" stroke="#2878d0" stroke-width="2.300"/><rect x="919.500" y="77.500" width="4" height="3.500" fill="#2878d0"/>
<rect x="945.500" y="64.500" width="20" height="23" fill="#f4f8fc" stroke="#3a5a8a" stroke-width="1.400"/><path d="M949 69h12M949 73h5M949 80h5" stroke="#8aa0c0" stroke-width="1"/><rect x="949" y="74.500" width="4.500" height="3.500" fill="none" stroke="#8aa0c0" stroke-width=".8"/>
<circle cx="959.500" cy="78.500" r="4.300" fill="#b8dcf4" stroke="#333" stroke-width="1.500"/><path d="M962.800 82l4.500 4.500" stroke="#333" stroke-width="2.500" stroke-linecap="round"/>
<path d="M980.500 70l8 3.500l-3.500 1.500l2.800 4.500l-2 1.200l-2.800 -4.500l-2.500 2.800z" fill="#ddd" stroke="#555" stroke-width="1"/><text x="989" y="85" font-size="20" font-weight="bold" fill="#2a8a2a" font-family="Liberation Sans, sans-serif">?</text>
<path d="M1015 56V94" stroke="#a8a8a8" stroke-width="1.4"/>
<rect x="1024" y="57" width="8" height="37" fill="url(#gripg)"/><path d="M1032.5 57V94" stroke="#8a8a8a" stroke-width="1"/><rect x="1027.5" y="75" width="3" height="3" fill="#555"/>
<rect x="1038.5" y="64.5" width="12" height="9" rx="1" fill="#f2f2f2" stroke="#777" stroke-width="1.200"/><path d="M1039.1 66.1h10.8" stroke="#aaa" stroke-width="1.500"/><rect x="1042" y="69" width="12" height="9" rx="1" fill="#f2f2f2" stroke="#777" stroke-width="1.200"/><path d="M1042.6 70.6h10.8" stroke="#aaa" stroke-width="1.500"/><rect x="1046" y="74.5" width="14.5" height="12" rx="1" fill="#f2f2f2" stroke="#777" stroke-width="1.200"/><path d="M1046.6 76.1h13.3" stroke="#aaa" stroke-width="1.500"/><path d="M1047.5 84l3.62 -3.6l2.9 1.8l2.9 -3.6l3.62 2.4" fill="none" stroke="#8a8a8a" stroke-width="1"/>
<rect x="1071.5" y="64.5" width="23.5" height="23" rx="1" fill="#f2f2f2" stroke="#777" stroke-width="1.200"/><path d="M1072.1 66.1h22.3" stroke="#aaa" stroke-width="1.500"/><path d="M1083.300 64.500v23" stroke="#777" stroke-width="1.200"/><path d="M1073 82l3 -5l3 2.500l3 -6M1085 80l3 -4l3 2.500l3 -6" fill="none" stroke="#8a8a8a" stroke-width="1"/>
<rect x="1105.5" y="64.5" width="23.5" height="11" rx="1" fill="#f2f2f2" stroke="#777" stroke-width="1.200"/><path d="M1106.1 66.1h22.3" stroke="#aaa" stroke-width="1.500"/><path d="M1107 73l5.88 -3.3l4.7 1.65l4.7 -3.3l5.88 2.2" fill="none" stroke="#8a8a8a" stroke-width="1"/><rect x="1105.5" y="76.5" width="23.5" height="11" rx="1" fill="#f2f2f2" stroke="#777" stroke-width="1.200"/><path d="M1106.1 78.1h22.3" stroke="#aaa" stroke-width="1.500"/><path d="M1107 85l5.88 -3.3l4.7 1.65l4.7 -3.3l5.88 2.2" fill="none" stroke="#8a8a8a" stroke-width="1"/>
<rect x="1139.5" y="66.5" width="11.5" height="9" rx="1" fill="#f2f2f2" stroke="#777" stroke-width="1.200"/><path d="M1140.1 68.1h10.3" stroke="#aaa" stroke-width="1.500"/><path d="M1141 73l2.88 -2.7l2.3 1.35l2.3 -2.7l2.88 1.8" fill="none" stroke="#8a8a8a" stroke-width="1"/><rect x="1152" y="66.5" width="11.5" height="9" rx="1" fill="#f2f2f2" stroke="#777" stroke-width="1.200"/><path d="M1152.6 68.1h10.3" stroke="#aaa" stroke-width="1.500"/><path d="M1153.5 73l2.88 -2.7l2.3 1.35l2.3 -2.7l2.88 1.8" fill="none" stroke="#8a8a8a" stroke-width="1"/><rect x="1139.5" y="76.5" width="11.5" height="9" rx="1" fill="#f2f2f2" stroke="#777" stroke-width="1.200"/><path d="M1140.1 78.1h10.3" stroke="#aaa" stroke-width="1.500"/><path d="M1141 83l2.88 -2.7l2.3 1.35l2.3 -2.7l2.88 1.8" fill="none" stroke="#8a8a8a" stroke-width="1"/><rect x="1152" y="76.5" width="11.5" height="9" rx="1" fill="#f2f2f2" stroke="#777" stroke-width="1.200"/><path d="M1152.6 78.1h10.3" stroke="#aaa" stroke-width="1.500"/><path d="M1153.5 83l2.88 -2.7l2.3 1.35l2.3 -2.7l2.88 1.8" fill="none" stroke="#8a8a8a" stroke-width="1"/>
<rect x="1173" y="66.5" width="23.5" height="18.5" rx="1" fill="#f2f2f2" stroke="#777" stroke-width="1.200"/><path d="M1173.6 68.1h22.3" stroke="#aaa" stroke-width="1.500"/><path d="M1174.5 82.5l5.88 -5.55l4.7 2.77l4.7 -5.55l5.88 3.7" fill="none" stroke="#8a8a8a" stroke-width="1"/>
<g transform="translate(1184.700 76.300)"><circle r="5" fill="none" stroke="#4a4a4a" stroke-width="3"/><circle r="7.200" fill="none" stroke="#4a4a4a" stroke-width="2.400" stroke-dasharray="2.830 2.830"/></g>
<path d="M1210.5 56V94" stroke="#a8a8a8" stroke-width="1.4"/>
<text x="74" y="112.5" font-size="14.8" fill="#3a4452" textLength="67.5" lengthAdjust="spacingAndGlyphs">SAR 2023 (</text>
<text x="144" y="112.5" font-size="14.8" fill="#3cb371" textLength="50" lengthAdjust="spacingAndGlyphs">1.00000,</text>
<text x="199" y="112.5" font-size="14.8" fill="#f00000" textLength="43.5" lengthAdjust="spacingAndGlyphs">0.0000,</text>
<text x="247.5" y="112.5" font-size="14.8" fill="#ffff00" textLength="41" lengthAdjust="spacingAndGlyphs">0.0000</text>
<text x="292.5" y="112.5" font-size="14.8" fill="#3a4452" textLength="4" lengthAdjust="spacingAndGlyphs">)</text>
<text x="74" y="210" font-size="14.8" fill="#3a4452" textLength="93.5" lengthAdjust="spacingAndGlyphs">SPDR S&amp;P 500</text>
<text x="171.5" y="210" font-size="14.8" fill="#7da2cc" textLength="292.5" lengthAdjust="spacingAndGlyphs">(407.090, 407.280, 407.015, 407.240, +0.15500)</text>
<text x="465" y="210" font-size="14.8" fill="#3a4452" textLength="125" lengthAdjust="spacingAndGlyphs">, Stop Reverse 2023</text>
<text x="594" y="210" font-size="14.8" fill="#e2e2f0" textLength="57" lengthAdjust="spacingAndGlyphs">(406.153)</text>
<rect x="1861.5" y="99" width="20.5" height="15.5" fill="#e4e4e4" stroke="#f8f8f8" stroke-width="1"/><path d="M1861.5 114.5h20.5v-15.5" fill="none" stroke="#b4b4b4" stroke-width="1"/><rect x="1867" y="103.25" width="9.500" height="6.500" fill="none" stroke="#6a6a6a" stroke-width="2"/><rect x="1888.5" y="99" width="20.5" height="15.5" fill="#e4e4e4" stroke="#f8f8f8" stroke-width="1"/><path d="M1888.5 114.5h20.5v-15.5" fill="none" stroke="#b4b4b4" stroke-width="1"/><path d="M1895.05 103.25l7.400 7M1902.45 103.25l-7.400 7" stroke="#6a6a6a" stroke-width="2.200"/>
<rect x="1861.5" y="196.5" width="20.5" height="15.5" fill="#e4e4e4" stroke="#f8f8f8" stroke-width="1"/><path d="M1861.5 212h20.5v-15.5" fill="none" stroke="#b4b4b4" stroke-width="1"/><rect x="1867" y="200.75" width="9.500" height="6.500" fill="none" stroke="#6a6a6a" stroke-width="2"/><rect x="1888.5" y="196.5" width="20.5" height="15.5" fill="#e4e4e4" stroke="#f8f8f8" stroke-width="1"/><path d="M1888.5 212h20.5v-15.5" fill="none" stroke="#b4b4b4" stroke-width="1"/><path d="M1895.05 200.75l7.400 7M1902.45 200.75l-7.400 7" stroke="#6a6a6a" stroke-width="2.200"/>
<rect x="4.500" y="100.500" width="36.500" height="8.500" fill="url(#gripg2)"/>
<defs><linearGradient id="gripg2" x1="0" y1="0" x2="1" y2="1"><stop offset="0" stop-color="#f0f0f0"/><stop offset="1" stop-color="#b4b4b4"/></linearGradient></defs>
<rect x="21.500" y="103.500" width="3" height="2.500" fill="#555"/><path d="M4 110h37" stroke="#9a9a9a" stroke-width="1"/>
<rect x="5.500" y="114.500" width="14" height="29.500" fill="#e8e8e8" stroke="#a8a8a8" stroke-width="1"/><rect x="21.500" y="114.500" width="14" height="29.500" fill="#e8e8e8" stroke="#a8a8a8" stroke-width="1"/>
<path d="M14.500 124.500v7l-4.500 -3.500zM26 124.500v7l4.500 -3.500z" fill="#111"/>
<path d="M6 148h29" stroke="#aaa" stroke-width="1.200"/>
<rect x="8" y="156.5" width="23.500" height="24" fill="url(#btng)" stroke="#c2c2c2" stroke-width="1"/>
<text x="10.8" y="173" font-size="12.5" fill="#3a3a3a" textLength="18" lengthAdjust="spacingAndGlyphs" stroke="#3a3a3a" stroke-width=".35">abc</text>
<rect x="8" y="189" width="23.500" height="24" fill="url(#btng)" stroke="#c2c2c2" stroke-width="1"/>
<path d="M16 189v24M23.500 189v24M8 197h23.500M8 204.800h23.500" stroke="#666" stroke-width="1.300"/>
<path d="M6 220.500h29" stroke="#aaa" stroke-width="1.200"/>
<ellipse cx="20" cy="241.300" rx="11" ry="7.300" fill="url(#btng)" stroke="#555" stroke-width="1.300"/>
<rect x="9.300" y="267" width="21.500" height="15" fill="url(#btng)" stroke="#555" stroke-width="1.300"/>
<path d="M20 298l10.500 15h-21z" fill="url(#btng)" stroke="#555" stroke-width="1.300" stroke-linejoin="round"/>
<path d="M0 330.500h42" stroke="#b0b0b0" stroke-width="1"/><path d="M0 331.500h42" stroke="#fff" stroke-width="1"/>
<rect x="4.500" y="337.500" width="36.500" height="8" fill="url(#gripg2)"/><rect x="21.500" y="340.500" width="3" height="2.500" fill="#555"/>
<rect x="4.500" y="349.500" width="32.500" height="30" rx="2" fill="#dcebfa" stroke="#7ebcf2" stroke-width="1.200"/>
<path d="M12.500 356.500l13 6.500l-5.500 2l4 6.500l-3.500 2l-4 -6.500l-4 4z" fill="#4f98e8" stroke="#1f5ab8" stroke-width="1.300" stroke-linejoin="round"/>
<rect x="8" y="386" width="23.500" height="23.5" fill="url(#btng)" stroke="#c2c2c2" stroke-width="1"/><path d="M11 397.800h17.500M19.800 389v17.500" stroke="#444" stroke-width="2"/>
<path d="M6 417.500h29" stroke="#aaa" stroke-width="1.200"/>
<rect x="8" y="425.5" width="23.500" height="24" fill="url(#btng)" stroke="#c2c2c2" stroke-width="1"/><path d="M10 428l19.500 19.500" stroke="#444" stroke-width="1.800"/>
<rect x="8" y="458" width="23.500" height="24" fill="url(#btng)" stroke="#c2c2c2" stroke-width="1"/><path d="M11 470h17.500" stroke="#444" stroke-width="2"/>
<rect x="8" y="490.5" width="23.500" height="24" fill="url(#btng)" stroke="#c2c2c2" stroke-width="1"/><path d="M19.800 493.500v18" stroke="#444" stroke-width="2"/>
<rect x="8" y="523" width="23.500" height="24" fill="url(#btng)" stroke="#c2c2c2" stroke-width="1"/><path d="M10.500 526l19 18.500" stroke="#444" stroke-width="1.600"/><text x="22.5" y="534" font-size="8.5" fill="#444">L</text><text x="11" y="545" font-size="8.5" fill="#444">S</text>
<path d="M0 558.500h42" stroke="#b0b0b0" stroke-width="1"/><path d="M0 559.500h42" stroke="#fff" stroke-width="1"/>
<rect x="72" y="935.500" width="1569" height="7.500" fill="#dadada"/><rect x="72.500" y="936.500" width="1568.500" height="5.500" fill="#8e8e8e"/>
<path d="M1665.7 929V951" stroke="#8a8a8a" stroke-width="1.3"/>
<g fill="none" stroke="#5a5a5a" stroke-width="2.200"><path d="M1677 937.500a5.500 5.500 0 0 1 9.500 -2.500M1687.500 940.500a5.500 5.500 0 0 1 -9.500 2.500"/></g><path d="M1684.500 932l4.500 0.500l-1 4.500zM1680 946l-4.500 -0.500l1 -4.500z" fill="#5a5a5a"/>
<rect x="1700.500" y="930.500" width="15" height="17" fill="#ececec"/><path d="M1708.300 933.500v11" stroke="#5a5a5a" stroke-width="1.800"/>
<path d="M1725.7 929V951" stroke="#8a8a8a" stroke-width="1.3"/>
<path d="M1742.300 933v12" stroke="#5a5a5a" stroke-width="1.800"/><path d="M1742.300 930.500l3.500 4.500h-7zM1742.300 947.500l3.500 -4.500h-7z" fill="#5a5a5a"/>
<path d="M1768.300 931v16M1760.300 939h16" stroke="#5a5a5a" stroke-width="1.800"/><path d="M1768.300 929.500l3 4h-6zM1768.300 948.500l3 -4h-6zM1758.800 939l4 -3v6zM1777.800 939l-4 -3v6z" fill="#5a5a5a"/>
<circle cx="1795" cy="939" r="6.300" fill="#f6f6f6" stroke="#8a8a8a" stroke-width="1.300"/><path d="M1791.500 939h7" stroke="#5a5a5a" stroke-width="2"/>
<circle cx="1820.700" cy="939" r="6.300" fill="#f6f6f6" stroke="#8a8a8a" stroke-width="1.300"/><path d="M1817.200 939h7M1820.700 935.500v7" stroke="#5a5a5a" stroke-width="2"/>
<path d="M1838.3 929V951" stroke="#8a8a8a" stroke-width="1.3"/>
<path d="M1859 933.500v11l-7 -5.500zM1877.500 933.500v11l7 -5.500z" fill="#c6c6c6"/>
<rect x="1899" y="932" width="14" height="13.500" fill="#f4f4f4" stroke="#555" stroke-width="1.300"/><path d="M1899 934.500h14" stroke="#555" stroke-width="1.800"/><path d="M1901.500 938h1.500M1904.500 938h6.500M1901.500 940.500h1.500M1904.500 940.500h6.500M1901.500 943h1.500M1904.500 943h6.500" stroke="#666" stroke-width="1"/>
<rect x="6.5" y="958" width="6" height="36" fill="url(#gripg)"/><path d="M13 958V994" stroke="#8a8a8a" stroke-width="1"/><rect x="8" y="975.5" width="3" height="3" fill="#555"/>
<rect x="17.500" y="964" width="160" height="24.500" rx="2.500" fill="#fff" stroke="#8e8e8e" stroke-width="1.200"/><path d="M36 977h101" stroke="#222" stroke-width="1.200"/><path d="M162 974.500l4.800 4.800l4.800 -4.800" fill="none" stroke="#444" stroke-width="1.300"/>
<path d="M182 960V992" stroke="#b0b0b0" stroke-width="1.2"/>
<rect x="186.800" y="964" width="124" height="24.500" rx="2.500" fill="#fff" stroke="#8e8e8e" stroke-width="1.200"/><path d="M201 977h74" stroke="#222" stroke-width="1.200"/><path d="M295 974.500l4.800 4.800l4.800 -4.800" fill="none" stroke="#444" stroke-width="1.300"/>
<path d="M319.5 956V995" stroke="#a0a0a0" stroke-width="1.2"/>
<rect x="326.5" y="958" width="6" height="36" fill="url(#gripg)"/><path d="M333 958V994" stroke="#8a8a8a" stroke-width="1"/><rect x="328" y="975.5" width="3" height="3" fill="#555"/>
<rect x="338" y="961" width="120" height="31" fill="#f0f0f0"/>
<rect x="341" y="963.500" width="11.500" height="11.500" fill="#2e8b8b" stroke="#c8c8c8" stroke-width=".8"/>
<rect x="355.87" y="963.500" width="11.500" height="11.500" fill="#3cb371" stroke="#c8c8c8" stroke-width=".8"/>
<rect x="370.74" y="963.500" width="11.500" height="11.500" fill="#98fb98" stroke="#c8c8c8" stroke-width=".8"/>
<rect x="385.61" y="963.500" width="11.500" height="11.500" fill="#006400" stroke="#c8c8c8" stroke-width=".8"/>
<rect x="400.48" y="963.500" width="11.500" height="11.500" fill="#262626" stroke="#c8c8c8" stroke-width=".8"/>
<rect x="415.35" y="963.500" width="11.500" height="11.500" fill="#0000ff" stroke="#c8c8c8" stroke-width=".8"/>
<rect x="430.22" y="963.500" width="11.500" height="11.500" fill="#ff0000" stroke="#c8c8c8" stroke-width=".8"/>
<rect x="445.09" y="963.500" width="11.500" height="11.500" fill="#afeeee" stroke="#c8c8c8" stroke-width=".8"/>
<rect x="341" y="978.500" width="11.500" height="11.500" fill="#7fffd4" stroke="#c8c8c8" stroke-width=".8"/>
<rect x="355.87" y="978.500" width="11.500" height="11.500" fill="#7b7bcd" stroke="#c8c8c8" stroke-width=".8"/>
<rect x="370.74" y="978.500" width="11.500" height="11.500" fill="#ffa75a" stroke="#c8c8c8" stroke-width=".8"/>
<rect x="385.61" y="978.500" width="11.500" height="11.500" fill="#ffc0cb" stroke="#c8c8c8" stroke-width=".8"/>
<rect x="400.48" y="978.500" width="11.500" height="11.500" fill="#e6e6fa" stroke="#c8c8c8" stroke-width=".8"/>
<rect x="415.35" y="978.500" width="11.500" height="11.500" fill="#ffd700" stroke="#c8c8c8" stroke-width=".8"/>
<rect x="430.22" y="978.500" width="11.500" height="11.500" fill="#ffff00" stroke="#c8c8c8" stroke-width=".8"/>
<rect x="445.09" y="978.500" width="11.500" height="11.500" fill="#696969" stroke="#c8c8c8" stroke-width=".8"/>
<rect x="428.72" y="962" width="14.500" height="14.500" fill="none" stroke="#888" stroke-width="1" stroke-dasharray="1 1"/>
<path d="M460.500 975h7l-3.500 4z" fill="#111"/>
<path d="M480 956V995" stroke="#a0a0a0" stroke-width="1.2"/>
<rect x="488.5" y="958" width="6" height="36" fill="url(#gripg)"/><path d="M495 958V994" stroke="#8a8a8a" stroke-width="1"/><rect x="490" y="975.5" width="3" height="3" fill="#555"/>
<rect x="505.5" y="971" width="18" height="14" fill="#f8f8ff" stroke="#7a8aa8" stroke-width="1"/><path d="M506 972h17" stroke="#a8b8d8" stroke-width="1.500"/>
<path d="M507 981.500l3.500 -3l3 1.500" fill="none" stroke="#e02020" stroke-width="1.300"/>
<text x="515.5" y="984" font-size="11" fill="#222" font-family="Liberation Serif, serif">1</text>
<rect x="538.8" y="971" width="18" height="14" fill="#f8f8ff" stroke="#7a8aa8" stroke-width="1"/><path d="M539.3 972h17" stroke="#a8b8d8" stroke-width="1.500"/>
<path d="M540.3 981.500l3.500 -3l3 1.500" fill="none" stroke="#e02020" stroke-width="1.300"/>
<text x="548.8" y="984" font-size="11" fill="#222" font-family="Liberation Serif, serif">2</text>
<rect x="572.8" y="971" width="18" height="14" fill="#f8f8ff" stroke="#7a8aa8" stroke-width="1"/><path d="M573.3 972h17" stroke="#a8b8d8" stroke-width="1.500"/>
<path d="M574.3 981.500l3.500 -3l3 1.500" fill="none" stroke="#e02020" stroke-width="1.300"/>
<text x="582.8" y="984" font-size="11" fill="#222" font-family="Liberation Serif, serif">3</text>
<rect x="606.5" y="971" width="18" height="14" fill="#f8f8ff" stroke="#7a8aa8" stroke-width="1"/><path d="M607 972h17" stroke="#a8b8d8" stroke-width="1.500"/>
<path d="M608 981.500l3.500 -3l3 1.500" fill="none" stroke="#e02020" stroke-width="1.300"/>
<text x="616.5" y="984" font-size="11" fill="#222" font-family="Liberation Serif, serif">4</text>
<rect x="640.5" y="971" width="18" height="14" fill="#f8f8ff" stroke="#7a8aa8" stroke-width="1"/><path d="M641 972h17" stroke="#a8b8d8" stroke-width="1.500"/>
<path d="M642 981.500l3.500 -3l3 1.500" fill="none" stroke="#e02020" stroke-width="1.300"/>
<text x="650.5" y="984" font-size="11" fill="#222" font-family="Liberation Serif, serif">5</text>
<rect x="673.8" y="971" width="18" height="14" fill="#f8f8ff" stroke="#7a8aa8" stroke-width="1"/><path d="M674.3 972h17" stroke="#a8b8d8" stroke-width="1.500"/>
<path d="M675.3 981.500l3.500 -3l3 1.500" fill="none" stroke="#e02020" stroke-width="1.300"/>
<text x="683.8" y="984" font-size="11" fill="#222" font-family="Liberation Serif, serif">6</text>
<path d="M709.5 956V995" stroke="#a0a0a0" stroke-width="1.2"/>
<text x="12" y="1015" font-size="16" fill="#f4f4f4" textLength="127.5" lengthAdjust="spacingAndGlyphs">For Help, press F1</text>
<text x="1581" y="1015" font-size="16" fill="#f4f4f4" textLength="76" lengthAdjust="spacingAndGlyphs">17/02/2023</text>
<text x="1684" y="1015" font-size="16" fill="#f4f4f4" textLength="38.7" lengthAdjust="spacingAndGlyphs">04:25</text>
<text x="1776" y="1015" font-size="16" fill="#f4f4f4" textLength="56" lengthAdjust="spacingAndGlyphs">407.563</text>
<rect x="1863.500" y="999.500" width="25.500" height="19" fill="#fff"/>
<text x="1870.5" y="1015" font-size="17" fill="#0a8a0a" font-weight="bold">$</text>
<rect x="1893.500" y="999.500" width="23" height="19" fill="#f4f4f4"/>
<rect x="1902" y="1001.500" width="10" height="8" fill="#5a8ad8" stroke="#888" stroke-width=".8"/><rect x="1897" y="1004.500" width="11" height="8.500" fill="#3a6ad0" stroke="#999" stroke-width=".8"/><path d="M1899 1015.500h8M1898 1017h10" stroke="#666" stroke-width="1.200"/>
</svg>
<div id="task" class="abs"></div>
<svg class="abs" style="left:0;top:1020px" width="1920" height="60" viewBox="0 1020 1920 60" font-family="Liberation Sans, sans-serif">
<defs><linearGradient id="sun" x1="0" y1="0" x2="0" y2="1"><stop offset="0" stop-color="#ffc21a"/><stop offset="1" stop-color="#f47a10"/></linearGradient><linearGradient id="win" x1="0" y1="0" x2="1" y2="1"><stop offset="0" stop-color="#6fd8ff"/><stop offset="1" stop-color="#1f9aee"/></linearGradient><linearGradient id="chat" x1="0" y1="0" x2="1" y2="1"><stop offset="0" stop-color="#8a8af0"/><stop offset="1" stop-color="#5a4ac8"/></linearGradient><linearGradient id="edge" x1="0" y1="0" x2="1" y2="1"><stop offset="0" stop-color="#35c1f1"/><stop offset=".5" stop-color="#1b7fd4"/><stop offset="1" stop-color="#47d16c"/></linearGradient><linearGradient id="msb" x1="0" y1="0" x2="0" y2="1"><stop offset="0" stop-color="#3a3a3a"/><stop offset="1" stop-color="#000"/></linearGradient></defs>
<circle cx="40.500" cy="1047.500" r="12" fill="url(#sun)"/>
<path d="M35 1066q-4.500 -0.300 -4.300 -4.300q0.500 -3.700 5 -3.500q2 -5.200 8 -4.700q5 0.500 6.300 4.700q5 -0.700 5.500 3.500q0 4 -4 4.300z" fill="#d4e4f8"/>
<text x="65.5" y="1046" font-size="14.8" fill="#fff" textLength="29" lengthAdjust="spacingAndGlyphs">18°C</text>
<text x="65.5" y="1065.5" font-size="14.8" fill="#f0f0f0" textLength="70" lengthAdjust="spacingAndGlyphs">Parc. Ensol</text>
<rect x="490.5" y="1036.7" width="13.500" height="13.500" rx="1" fill="url(#win)"/>
<rect x="505.5" y="1036.7" width="13.500" height="13.500" rx="1" fill="url(#win)"/>
<rect x="490.5" y="1051.7" width="13.500" height="13.500" rx="1" fill="url(#win)"/>
<rect x="505.5" y="1051.7" width="13.500" height="13.500" rx="1" fill="url(#win)"/>
<rect x="537" y="1030.500" width="134.500" height="39.500" rx="19.500" fill="#2c2933" stroke="#33303a" stroke-width="1"/>
<circle cx="574.500" cy="1048" r="5.300" fill="none" stroke="#fff" stroke-width="1.700"/><path d="M570.800 1052l-5 5.500" stroke="#fff" stroke-width="1.900" stroke-linecap="round"/>
<text x="588.3" y="1055.3" font-size="15" fill="#fff" textLength="57.5" lengthAdjust="spacingAndGlyphs">Procurar</text>
<circle cx="702.500" cy="1050" r="14" fill="url(#chat)"/><path d="M691 1060l-2.500 5.500l7.500 -2.500z" fill="#6a5ad8"/>
<rect x="694.500" y="1045" width="11" height="9.500" rx="2" fill="#fff"/><path d="M706.500 1049l4.500 -3v8l-4.500 -3z" fill="#fff"/>
<rect x="743.6" y="1035.500" width="29.500" height="28.500" rx="3" fill="url(#msb)" stroke="#3a3a3a" stroke-width="1"/><path d="M750.3 1062v-9l2.800 0v9zM754.8 1062v-15l3 0v15zM759.8 1062l2 -23h3.500l-2 23z" fill="#f08a1c"/>
<path d="M798 1040q0 -2 2 -2h8l3 3h15q2 0 2 2v19q0 2 -2 2h-26q-2 0 -2 -2z" fill="#f2b01c"/><path d="M798 1045.500h30v16.500q0 2 -2 2h-26q-2 0 -2 -2z" fill="#ffd65a"/><rect x="806" y="1056.500" width="14" height="4.500" rx="1.500" fill="#1f8ae0"/>
<rect x="865.5" y="1037" width="17" height="26" rx="1.500" fill="#fff" stroke="#2b579a" stroke-width="1"/><path d="M872 1043h8M872 1047h8M872 1051h8M872 1055h8" stroke="#2b579a" stroke-width="1.500"/><rect x="854" y="1041" width="17" height="18" rx="1.500" fill="#2b579a"/><text x="862.5" y="1055.500" font-size="14" font-weight="bold" fill="#fff" text-anchor="middle">W</text>
<rect x="920" y="1037" width="17" height="26" rx="1.500" fill="#fff" stroke="#d24726" stroke-width="1"/><path d="M926.5 1043h8M926.5 1047h8M926.5 1051h8M926.5 1055h8" stroke="#d24726" stroke-width="1.500"/><rect x="908.5" y="1041" width="17" height="18" rx="1.500" fill="#d24726"/><text x="917" y="1055.500" font-size="14" font-weight="bold" fill="#fff" text-anchor="middle">P</text>
<path d="M977.300 1035.500l3.500 0l8.500 22h-20.500z" fill="#f48a10"/><path d="M973.300 1045.500h8l1.500 4.500h-11zM970.800 1053h13l1.500 4h-16z" fill="#f4f4f4"/><path d="M964.500 1058.500h25.500l2.500 6h-30.500z" fill="#f48a10"/>
<circle cx="1033.300" cy="1050" r="14.500" fill="url(#edge)"/><path d="M1024 1054q0 -9 9.500 -9q8 0 8 6q0 3 -4 3h-7q0 7 9 7q-10 3 -15.500 -7z" fill="#123a7a" opacity=".55"/>
<circle cx="1086.7" cy="1050" r="14.500" fill="#db4437"/><path d="M1086.7 1050L1079.5 1062.500A14.500 14.500 0 0 1 1074.2 1042.700z" fill="#0f9d58"/><path d="M1086.7 1050L1101.2 1050A14.500 14.500 0 0 1 1079.5 1062.600z" fill="#ffcd40"/><path d="M1086.7 1050L1079.5 1062.600L1101.2 1050z" fill="#ffcd40"/><circle cx="1086.7" cy="1050" r="6.600" fill="#fff"/><circle cx="1086.7" cy="1050" r="5.200" fill="#4285f4"/><circle cx="1095.2" cy="1042" r="6" fill="#f06a1c"/><text x="1095.2" y="1045" font-size="8" fill="#fff" text-anchor="middle">N</text>
<rect x="1140" y="1037" width="17" height="26" rx="1.500" fill="#fff" stroke="#3955a3" stroke-width="1"/><path d="M1146.5 1043h8M1146.5 1047h8M1146.5 1051h8M1146.5 1055h8" stroke="#3955a3" stroke-width="1.500"/><rect x="1128.5" y="1041" width="17" height="18" rx="1.500" fill="#3955a3"/><text x="1137" y="1055.500" font-size="14" font-weight="bold" fill="#fff" text-anchor="middle">V</text>
<rect x="1186.500" y="1035.500" width="22" height="29" rx="2" fill="#5a6a7a" stroke="#8a9aaa" stroke-width="1"/><rect x="1189.500" y="1038" width="16" height="5" fill="#3ac0f0"/>
<rect x="1189.5" y="1045.5" width="4" height="3.500" fill="#d8e0e8"/>
<rect x="1195.5" y="1045.5" width="4" height="3.500" fill="#d8e0e8"/>
<rect x="1201.5" y="1045.5" width="4" height="3.500" fill="#d8e0e8"/>
<rect x="1189.5" y="1050.2" width="4" height="3.500" fill="#d8e0e8"/>
<rect x="1195.5" y="1050.2" width="4" height="3.500" fill="#d8e0e8"/>
<rect x="1201.5" y="1050.2" width="4" height="3.500" fill="#d8e0e8"/>
<rect x="1189.5" y="1054.9" width="4" height="3.500" fill="#d8e0e8"/>
<rect x="1195.5" y="1054.9" width="4" height="3.500" fill="#d8e0e8"/>
<rect x="1201.5" y="1054.9" width="4" height="3.500" fill="#d8e0e8"/>
<rect x="1189.5" y="1059.6" width="4" height="3.500" fill="#d8e0e8"/>
<rect x="1195.5" y="1059.6" width="4" height="3.500" fill="#d8e0e8"/>
<rect x="1201.5" y="1059.6" width="4" height="3.500" fill="#d8e0e8"/>
<circle cx="1252.7" cy="1050" r="14.500" fill="#db4437"/><path d="M1252.7 1050L1245.5 1062.500A14.500 14.500 0 0 1 1240.2 1042.700z" fill="#0f9d58"/><path d="M1252.7 1050L1267.2 1050A14.500 14.500 0 0 1 1245.5 1062.600z" fill="#ffcd40"/><path d="M1252.7 1050L1245.5 1062.600L1267.2 1050z" fill="#ffcd40"/><circle cx="1252.7" cy="1050" r="6.600" fill="#fff"/><circle cx="1252.7" cy="1050" r="5.200" fill="#4285f4"/>
<rect x="1305" y="1037" width="17" height="26" rx="1.500" fill="#fff" stroke="#1e7145" stroke-width="1"/><path d="M1311.500 1043h8M1311.500 1047h8M1311.500 1051h8M1311.500 1055h8M1315.500 1040v20" stroke="#1e7145" stroke-width="1.300"/><rect x="1293.500" y="1041" width="17" height="18" rx="1.500" fill="#1e7145"/><text x="1302" y="1055.500" font-size="14" font-weight="bold" fill="#fff" text-anchor="middle">X</text>
<rect x="1348" y="1035" width="30" height="30" fill="#0a8a8a"/><path d="M1355 1061.500h16v-3.500h-16zM1356.500 1057q-1.500 -6 -3 -8q1 -4.500 5 -3q2 -4 4.500 -4t4.500 4q4 -1.500 5 3q-1.500 2 -3 8z" fill="#fff" stroke="#222" stroke-width=".8"/><path d="M1363 1037v5M1361 1039h4" stroke="#fff" stroke-width="1.300"/>
<rect x="1393.500" y="1025.500" width="49" height="48" rx="4" fill="#34313c" stroke="#3f3c48" stroke-width="1"/>
<rect x="1403" y="1035.500" width="29.500" height="28.500" rx="3" fill="url(#msb)" stroke="#3a3a3a" stroke-width="1"/><path d="M1409.7 1062v-9l2.800 0v9zM1414.2 1062v-15l3 0v15zM1419.2 1062l2 -23h3.500l-2 23z" fill="#f08a1c"/>
<rect x="1408.500" y="1070" width="18.500" height="3" rx="1.500" fill="#4cc2ff"/>
<rect x="864.500" y="1070.500" width="6.500" height="2.500" rx="1.200" fill="#9a9a9a"/><rect x="1194" y="1070.500" width="6.500" height="2.500" rx="1.200" fill="#9a9a9a"/>
<path d="M1689.500 1053.500l6.500 -6.500l6.500 6.500" fill="none" stroke="#fff" stroke-width="1.500"/>
<g fill="none" stroke="#fff" stroke-width="1.500" stroke-linecap="round"><path d="M1721.500 1047a13 13 0 0 1 18.400 0M1724.500 1050.500a8.700 8.700 0 0 1 12.400 0M1727.500 1054a4.400 4.400 0 0 1 6.400 0"/></g><circle cx="1730.700" cy="1056.800" r="1.300" fill="#fff"/>
<path d="M1752.500 1047.500h3l4.500 -4v13l-4.500 -4h-3z" fill="none" stroke="#fff" stroke-width="1.400" stroke-linejoin="round"/><path d="M1763 1046.500a5 5 0 0 1 0 7" fill="none" stroke="#fff" stroke-width="1.300"/><path d="M1765.500 1044a8.500 8.500 0 0 1 0 12" fill="none" stroke="#8a8a8a" stroke-width="1.300"/>
<rect x="1784.500" y="1045" width="13.500" height="10.500" rx="2" fill="none" stroke="#fff" stroke-width="1.500"/><path d="M1798.500 1048v4.500" stroke="#fff" stroke-width="2"/><path d="M1782 1043.500h5v4h-5zM1783.500 1041v2.500M1785.500 1041v2.500" stroke="#fff" stroke-width="1.200" fill="#fff"/>
<text x="1861.7" y="1044" font-size="14.5" fill="#fff" textLength="33.3" lengthAdjust="spacingAndGlyphs">15:32</text>
<text x="1820.7" y="1064" font-size="14.5" fill="#fff" textLength="74.3" lengthAdjust="spacingAndGlyphs">18/02/2023</text>
</svg>
</div>
</body></html>
